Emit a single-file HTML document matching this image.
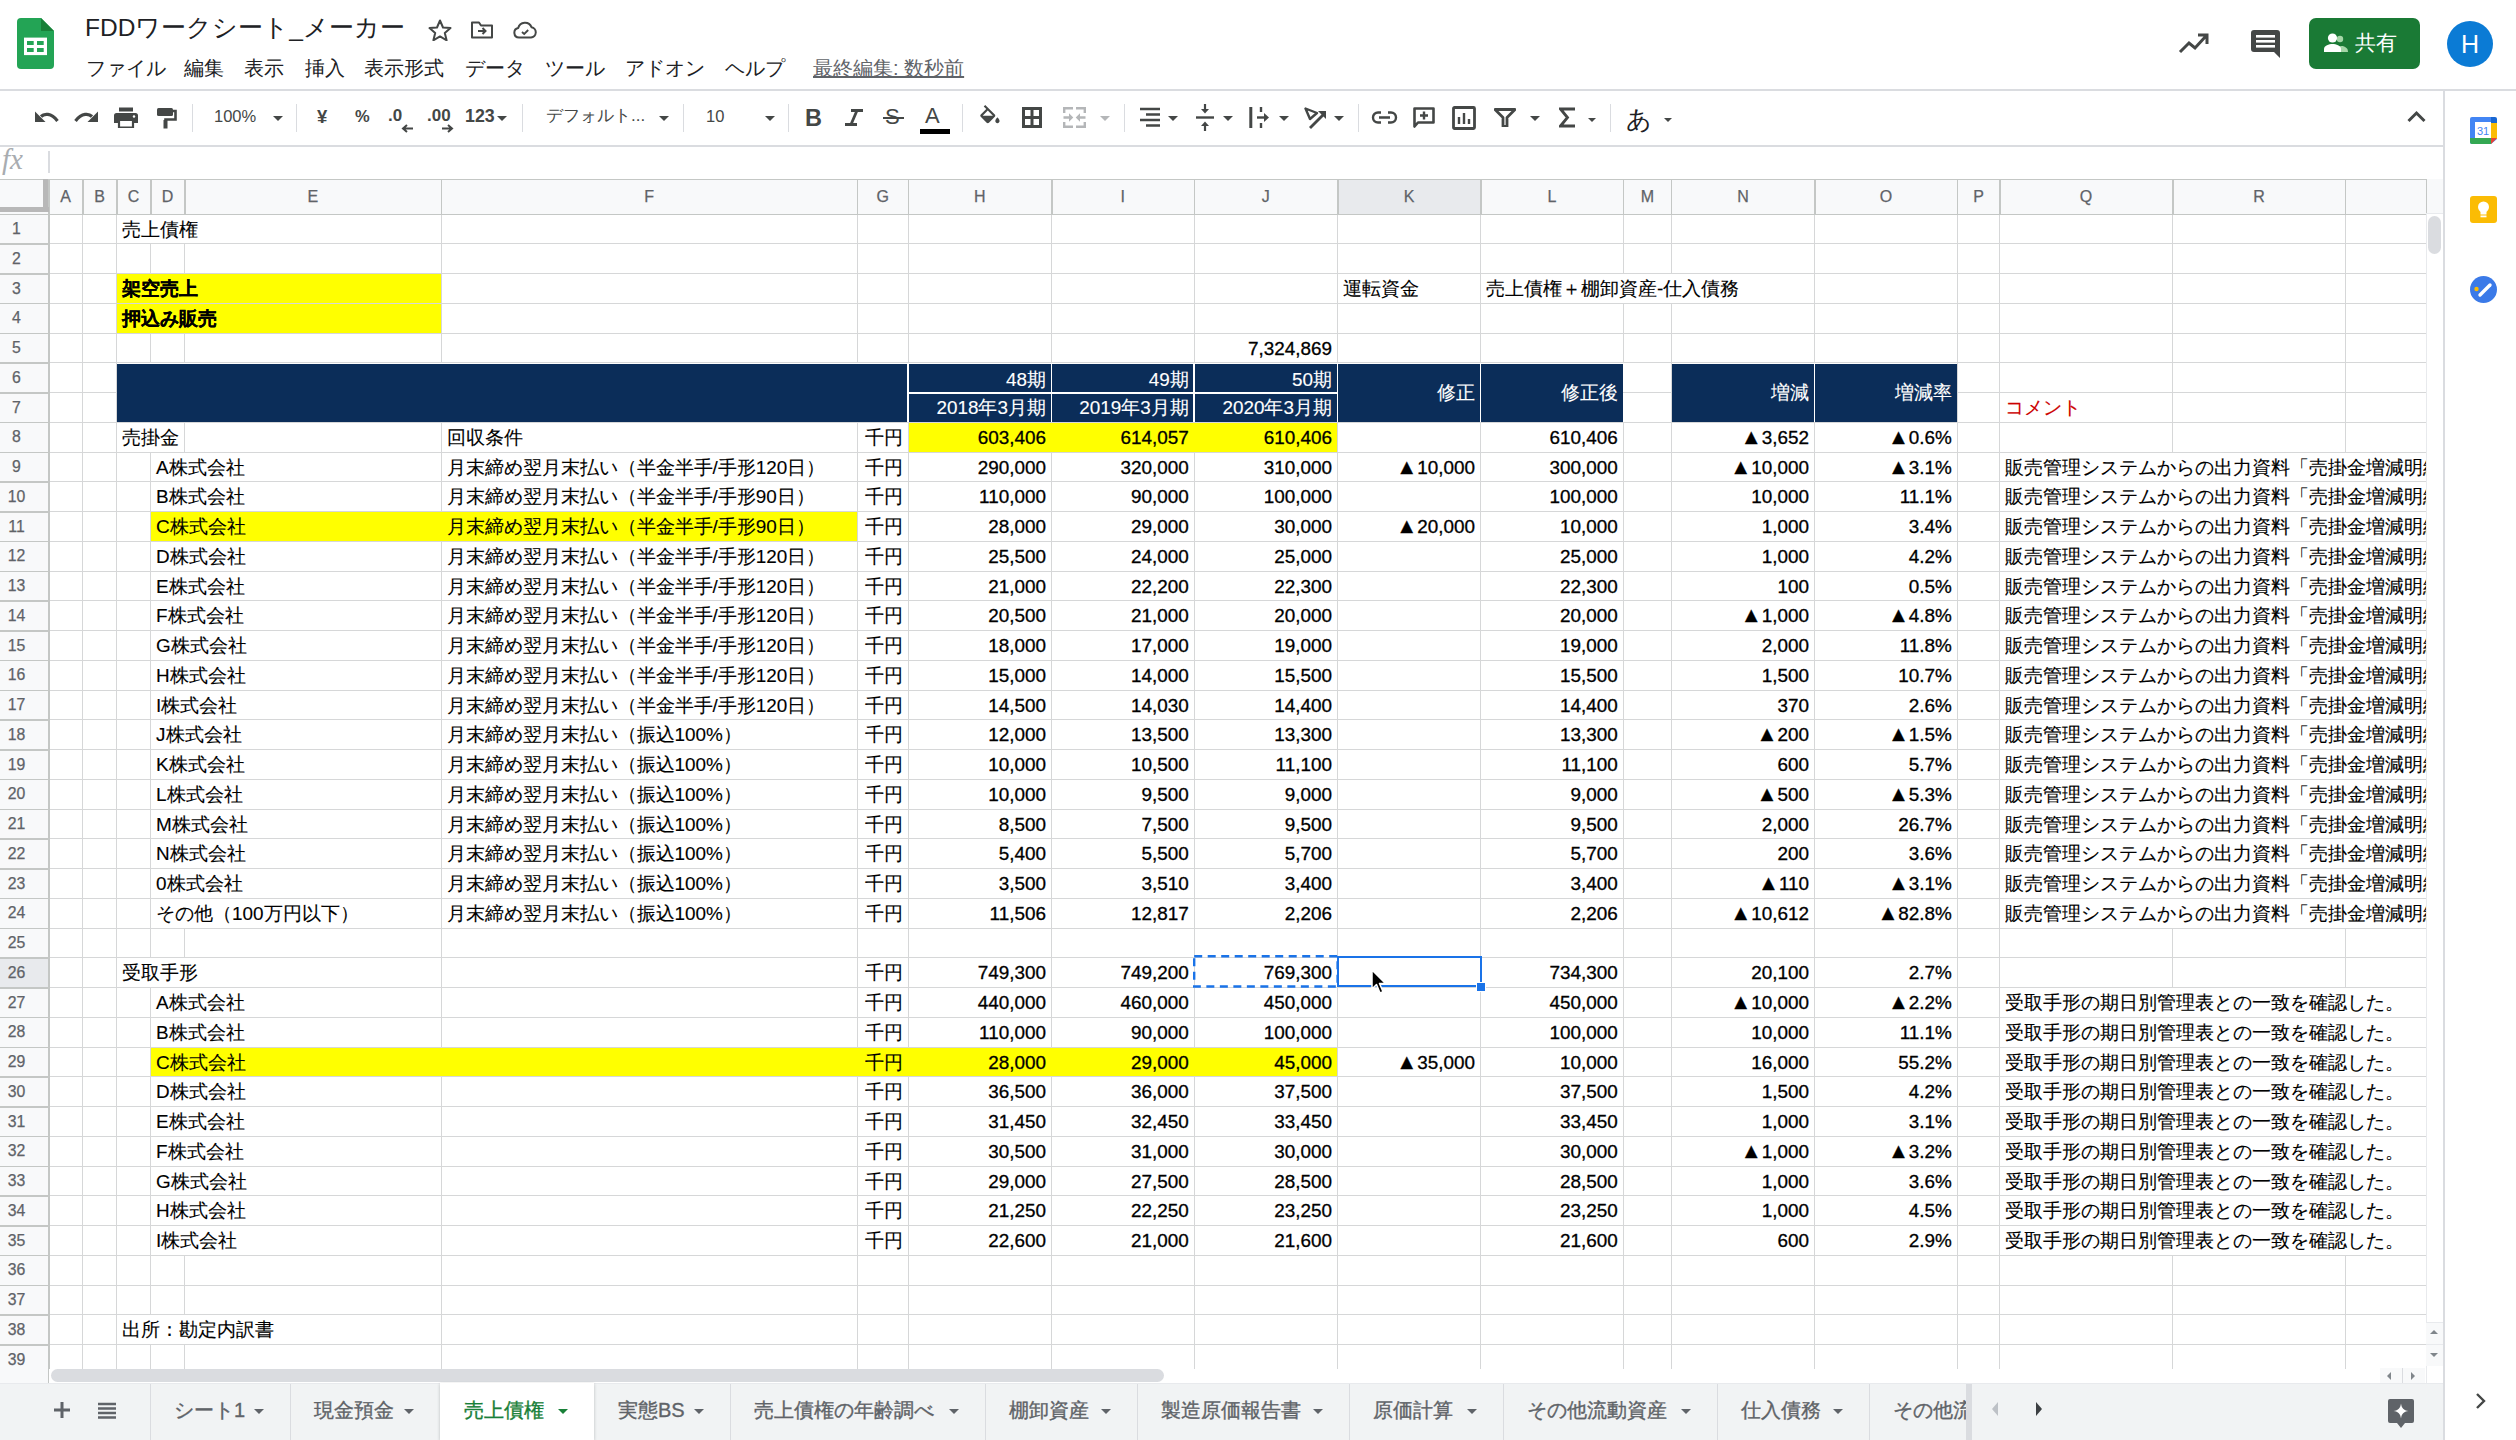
<!DOCTYPE html><html lang="ja"><head><meta charset="utf-8"><title>FDD</title><style>
*{margin:0;padding:0;box-sizing:border-box}
html,body{width:2516px;height:1440px;overflow:hidden;background:#fff;font-family:"Liberation Sans",sans-serif;color:#000}
.a{position:absolute}
.ic{position:absolute;fill:#444746}
.mn{position:absolute;top:54px;font-size:20px;color:#202124;white-space:nowrap;line-height:28px}
.tb{position:absolute;color:#444746;white-space:nowrap}
.sep{position:absolute;top:104px;width:1px;height:28px;background:#dadce0}
.arr{position:absolute;width:0;height:0;border-left:5.5px solid transparent;border-right:5.5px solid transparent;border-top:5.5px solid #444746}
.ch{position:absolute;top:179px;height:35px;line-height:35px;text-align:center;font-size:16px;color:#5f6368;-webkit-text-stroke:0.25px currentColor}
.rh{position:absolute;left:0;width:33px;text-align:center;font-size:15.8px;color:#5f6368;line-height:29.75px;height:29.75px;-webkit-text-stroke:0.25px currentColor}
.c{position:absolute;font-size:18.9px;line-height:29.75px;height:29.75px;white-space:nowrap;overflow:visible;-webkit-text-stroke:0.12px currentColor}
.n{-webkit-text-stroke:0.3px currentColor}
.r{text-align:right}
.w{color:#fff}
.tab{position:absolute;top:1384px;height:56px;line-height:52px;font-size:20px;color:#5f6368;white-space:nowrap;-webkit-text-stroke:0.35px currentColor}
</style></head><body><svg class="a" style="left:17px;top:18px" width="37" height="51" viewBox="0 0 37 51"><path d="M4 0H24L37 13V47A4 4 0 0 1 33 51H4A4 4 0 0 1 0 47V4A4 4 0 0 1 4 0Z" fill="#23a455"/><path d="M24 0L37 13H24Z" fill="#188038"/><rect x="7" y="19.6" width="23" height="17.5" fill="#fff"/><rect x="10" y="23" width="6.7" height="4" fill="#23a455"/><rect x="20" y="23" width="6.7" height="4" fill="#23a455"/><rect x="10" y="30" width="6.7" height="4" fill="#23a455"/><rect x="20" y="30" width="6.7" height="4" fill="#23a455"/></svg><div class="a" style="left:85px;top:12px;font-size:24.5px;line-height:32px;color:#202124;white-space:nowrap">FDDワークシート_メーカー</div><svg class="a" style="left:428px;top:19px" width="24" height="22" viewBox="0 0 24 22"><path d="M12 1.5l3 7 7.5.6-5.7 4.9 1.8 7.3L12 17.4 5.4 21.3l1.8-7.3L1.5 9.1 9 8.5z" fill="none" stroke="#444746" stroke-width="2" stroke-linejoin="round"/></svg><svg class="a" style="left:471px;top:21px" width="22" height="18" viewBox="0 0 22 18"><path d="M1 3V16.5H21V4.5H10L8 1.5H1Z" fill="none" stroke="#444746" stroke-width="2" stroke-linejoin="round"/><path d="M7 10H14M11.5 7L14.5 10L11.5 13" fill="none" stroke="#444746" stroke-width="2"/></svg><svg class="a" style="left:513px;top:21px" width="24" height="18" viewBox="0 0 24 18"><path d="M6 16.5A4.8 4.8 0 0 1 5.2 7 7 7 0 0 1 18.5 6.2 5.2 5.2 0 0 1 18 16.5Z" fill="none" stroke="#444746" stroke-width="2" stroke-linejoin="round"/><path d="M9 11l2.2 2 4-4" fill="none" stroke="#444746" stroke-width="1.8"/></svg><div class="mn" style="left:86px">ファイル</div><div class="mn" style="left:184px">編集</div><div class="mn" style="left:244px">表示</div><div class="mn" style="left:305px">挿入</div><div class="mn" style="left:364px">表示形式</div><div class="mn" style="left:465px">データ</div><div class="mn" style="left:545px">ツール</div><div class="mn" style="left:625px">アドオン</div><div class="mn" style="left:725px">ヘルプ</div><div class="mn" style="left:813px;color:#5f6368;text-decoration:underline">最終編集: 数秒前</div><svg class="a" style="left:2178px;top:32px" width="32" height="22" viewBox="0 0 32 22"><path d="M2 20L11 11L17 16L28 4M20 3H29V12" fill="none" stroke="#444746" stroke-width="3"/></svg><svg class="a" style="left:2251px;top:29px" width="30" height="30" viewBox="0 0 30 30"><path d="M3 1H26A3 3 0 0 1 29 4V29L23 23H3A3 3 0 0 1 0 20V4A3 3 0 0 1 3 1Z" fill="#444746"/><rect x="5" y="6" width="19" height="2.6" fill="#fff"/><rect x="5" y="11" width="19" height="2.6" fill="#fff"/><rect x="5" y="16" width="19" height="2.6" fill="#fff"/></svg><div class="a" style="left:2309px;top:18px;width:111px;height:51px;border-radius:7px;background:#1a7a35"></div><svg class="a" style="left:2324px;top:33px" width="26" height="20" viewBox="0 0 26 20"><circle cx="16" cy="6" r="3.2" fill="#a5d6a7"/><path d="M13 19V15.5C14 13 18 12.5 20 13.5S24 15 24 19Z" fill="#a5d6a7"/><circle cx="8.5" cy="5" r="4.6" fill="#fff"/><path d="M0 19V16C0 12.5 5 11 8.5 11S17 12.5 17 16V19Z" fill="#fff"/></svg><div class="a" style="left:2355px;top:29px;font-size:21px;line-height:28px;color:#fff;white-space:nowrap">共有</div><div class="a" style="left:2447px;top:21px;width:46px;height:46px;border-radius:50%;background:#0b7bd5;color:#fff;font-size:25px;line-height:46px;text-align:center">H</div><div class="a" style="left:0;top:89px;width:2516px;height:1.5px;background:#dadce0"></div><svg class="a" style="left:34px;top:110px" width="25" height="15" viewBox="0 0 25 15"><path d="M7 6.5C10 3.5 17 2.5 23.5 11" fill="none" stroke="#444746" stroke-width="3.2"/><path d="M1 1.5V12H11.5Z" fill="#444746"/></svg><svg class="a" style="left:74px;top:110px" width="25" height="15" viewBox="0 0 25 15"><path d="M18 6.5C15 3.5 8 2.5 1.5 11" fill="none" stroke="#444746" stroke-width="3.2"/><path d="M24 1.5V12H13.5Z" fill="#444746"/></svg><svg class="a" style="left:114px;top:107px" width="24" height="21" viewBox="0 0 24 21"><rect x="5" y="0.5" width="14" height="4" fill="#444746"/><path d="M2.5 6H21.5A2.5 2.5 0 0 1 24 8.5V16H19.5V12H4.5V16H0V8.5A2.5 2.5 0 0 1 2.5 6Z" fill="#444746"/><path d="M5 13H19V20.5H5Z" fill="none" stroke="#444746" stroke-width="2.2"/><circle cx="20" cy="9.5" r="1.2" fill="#fff"/></svg><svg class="a" style="left:156px;top:107px" width="21" height="22" viewBox="0 0 21 22"><rect x="1" y="1" width="16" height="8" rx="1.5" fill="#444746"/><path d="M17 4H19.5V12.5H9.5V21" fill="none" stroke="#444746" stroke-width="2.6"/><rect x="7.5" y="13" width="4" height="8.5" fill="#444746"/></svg><div class="sep" style="left:192px"></div><div class="sep" style="left:296px"></div><div class="sep" style="left:522px"></div><div class="sep" style="left:683px"></div><div class="sep" style="left:788px"></div><div class="sep" style="left:962px"></div><div class="sep" style="left:1124px"></div><div class="sep" style="left:1358px"></div><div class="sep" style="left:1610px"></div><div class="tb" style="left:214px;top:104px;font-size:16.5px;line-height:24px">100%</div><div class="arr" style="left:273px;top:116px;border-left-width:5.5px;border-right-width:5.5px;border-top:5.5px solid #444746"></div><div class="tb" style="left:317px;top:103px;font-size:18.5px;line-height:28px;font-weight:bold">¥</div><div class="tb" style="left:355px;top:104px;font-size:16.5px;line-height:24px;font-weight:bold">%</div><div class="tb" style="left:388px;top:104px;font-size:17px;line-height:24px;font-weight:bold">.0</div><svg class="a" style="left:401px;top:124px" width="12" height="9" viewBox="0 0 12 9"><path d="M12 4.5H3M6 1L2 4.5L6 8" fill="none" stroke="#444746" stroke-width="2"/></svg><div class="tb" style="left:427px;top:104px;font-size:17px;line-height:24px;font-weight:bold">.00</div><svg class="a" style="left:442px;top:124px" width="12" height="9" viewBox="0 0 12 9"><path d="M0 4.5H9M6 1L10 4.5L6 8" fill="none" stroke="#444746" stroke-width="2"/></svg><div class="tb" style="left:465px;top:104px;font-size:17.8px;line-height:24px;font-weight:bold">123</div><div class="arr" style="left:497px;top:116px;border-left-width:5.5px;border-right-width:5.5px;border-top:5.5px solid #444746"></div><div class="tb" style="left:546px;top:103px;font-size:17px;line-height:26px">デフォルト...</div><div class="arr" style="left:659px;top:116px;border-left-width:5.5px;border-right-width:5.5px;border-top:5.5px solid #444746"></div><div class="tb" style="left:706px;top:104px;font-size:16.5px;line-height:24px">10</div><div class="arr" style="left:765px;top:116px;border-left-width:5.5px;border-right-width:5.5px;border-top:5.5px solid #444746"></div><div class="tb" style="left:805px;top:101px;font-size:23.5px;line-height:34px;font-weight:bold;color:#444746">B</div><svg class="a" style="left:844px;top:109px" width="20" height="17" viewBox="0 0 20 17"><path d="M7 1.5H19M1 15.5H13M13 1.5L7 15.5" fill="none" stroke="#444746" stroke-width="2.8"/></svg><div class="tb" style="left:885px;top:101px;font-size:22px;line-height:32px">S</div><div class="a" style="left:883px;top:116.5px;width:21px;height:2.6px;background:#444746"></div><div class="tb" style="left:925px;top:100px;font-size:22px;line-height:32px">A</div><div class="a" style="left:920px;top:129px;width:30px;height:5px;background:#000"></div><svg class="a" style="left:977px;top:105px" width="25" height="21" viewBox="0 0 23.2 19.6"><g transform="scale(1.0)"><path d="M16.56 8.94L7.62 0 6.21 1.41l2.38 2.38-5.15 5.15c-.59.59-.59 1.54 0 2.12l5.5 5.5c.29.29.68.44 1.060.44s.77-.15 1.06-.44l5.5-5.5c.59-.58.59-1.53 0-2.12zM5.21 10L10 5.21 14.79 10H5.21zM19 11.5s-2 2.17-2 3.5c0 1.1.9 2 2 2s2-.9 2-2c0-1.33-2-3.5-2-3.5z" fill="#444746"/></g></svg><svg class="a" style="left:1022px;top:107px" width="20" height="21" viewBox="0 0 20 21"><path d="M1.5 1.5H18.5V19.5H1.5ZM10 1.5V19.5M1.5 10.5H18.5" fill="none" stroke="#444746" stroke-width="3"/></svg><svg class="a" style="left:1063px;top:107px" width="23" height="21" viewBox="0 0 23 21"><path d="M1.2 6V1.2H10M13 1.2H21.8V6M1.2 15V19.8H10M13 19.8H21.8V15" fill="none" stroke="#b4b6b8" stroke-width="2.4"/><path d="M0.5 10.5H7M22.5 10.5H16" stroke="#b4b6b8" stroke-width="2.4"/><path d="M6 6.3L10.3 10.5L6 14.7ZM17 6.3L12.7 10.5L17 14.7Z" fill="#b4b6b8"/></svg><div class="arr" style="left:1100px;top:116px;border-left-width:5.5px;border-right-width:5.5px;border-top:5.5px solid #b4b6b8"></div><svg class="a" style="left:1140px;top:107px" width="21" height="21" viewBox="0 0 21 21"><path d="M0 2H20M6 7.5H20M0 13H20M6 18.5H20" fill="none" stroke="#444746" stroke-width="2.4"/></svg><div class="arr" style="left:1168px;top:116px;border-left-width:5.5px;border-right-width:5.5px;border-top:5.5px solid #444746"></div><svg class="a" style="left:1196px;top:104px" width="18" height="27" viewBox="0 0 18 27"><path d="M0 13.5H18" stroke="#444746" stroke-width="2.4"/><path d="M9 0V6" stroke="#444746" stroke-width="2.2"/><path d="M5 5H13L9 9.5Z" fill="#444746"/><path d="M9 27V21" stroke="#444746" stroke-width="2.2"/><path d="M5 22H13L9 17.5Z" fill="#444746"/></svg><div class="arr" style="left:1223px;top:116px;border-left-width:5.5px;border-right-width:5.5px;border-top:5.5px solid #444746"></div><svg class="a" style="left:1249px;top:107px" width="21" height="21" viewBox="0 0 21 21"><path d="M1.8 0V21" stroke="#444746" stroke-width="3"/><path d="M12 0V5M12 16V21" stroke="#444746" stroke-width="2.4"/><path d="M8 10.5H16" stroke="#444746" stroke-width="2.4"/><path d="M15 6L20 10.5L15 15Z" fill="#444746"/></svg><div class="arr" style="left:1279px;top:116px;border-left-width:5.5px;border-right-width:5.5px;border-top:5.5px solid #444746"></div><svg class="a" style="left:1304px;top:107px" width="23" height="22" viewBox="0 0 23 22"><path d="M1.5 1.5L13 6L6 12Z" fill="none" stroke="#444746" stroke-width="2.4" stroke-linejoin="round"/><path d="M6 21L20 7" stroke="#444746" stroke-width="2.8"/><path d="M14 4H22V12Z" fill="#444746"/></svg><div class="arr" style="left:1334px;top:116px;border-left-width:5.5px;border-right-width:5.5px;border-top:5.5px solid #444746"></div><svg class="a" style="left:1371px;top:110px" width="27" height="15" viewBox="0 0 27 15"><path d="M10 2.5H7A5 5 0 0 0 7 12.5H10M17 2.5H20A5 5 0 0 1 20 12.5H17M8 7.5H19" fill="none" stroke="#444746" stroke-width="2.4"/></svg><svg class="a" style="left:1413px;top:107px" width="22" height="21" viewBox="0 0 22 21"><path d="M1.5 1.5H20.5V15.5H5L1.5 19.5Z" fill="none" stroke="#444746" stroke-width="2.6" stroke-linejoin="round"/><path d="M11 4.5V12.5M7 8.5H15" stroke="#444746" stroke-width="2.4"/></svg><svg class="a" style="left:1452px;top:106px" width="24" height="24" viewBox="0 0 24 24"><rect x="1.5" y="1.5" width="21" height="21" fill="none" stroke="#444746" stroke-width="2.8" rx="1"/><path d="M7 11V18M12 7V18M17 13V18" stroke="#444746" stroke-width="2.4"/></svg><svg class="a" style="left:1494px;top:108px" width="22" height="19" viewBox="0 0 22 19"><path d="M1 1.5H21L13 9.5V18.5H9V9.5Z" fill="none" stroke="#444746" stroke-width="2.8" stroke-linejoin="round"/></svg><div class="arr" style="left:1530px;top:116px;border-left-width:5.5px;border-right-width:5.5px;border-top:5.5px solid #444746"></div><svg class="a" style="left:1559px;top:107px" width="17" height="21" viewBox="0 0 17 21"><path d="M16 2H1.5L8.5 10.5L1.5 19H16" fill="none" stroke="#444746" stroke-width="2.8"/></svg><div class="arr" style="left:1588px;top:118px;border-left-width:4.0px;border-right-width:4.0px;border-top:4.0px solid #444746"></div><div class="tb" style="left:1626px;top:102px;font-size:25px;line-height:34px;color:#202124">あ</div><div class="arr" style="left:1664px;top:118px;border-left-width:4.0px;border-right-width:4.0px;border-top:4.0px solid #444746"></div><svg class="a" style="left:2407px;top:110px" width="19" height="13" viewBox="0 0 19 13"><path d="M1.5 11L9.5 3L17.5 11" fill="none" stroke="#444746" stroke-width="3"/></svg><div class="a" style="left:0;top:145px;width:2443px;height:1.5px;background:#dadce0"></div><div class="a" style="left:2443px;top:90px;width:1.5px;height:1350px;background:#dadce0"></div><div class="a" style="left:2px;top:139px;font-size:29px;line-height:40px;font-family:'Liberation Serif',serif;font-style:italic;color:#a8acb0">fx</div><div class="a" style="left:48px;top:151px;width:1.5px;height:22px;background:#dadce0"></div><svg class="a" style="left:2470px;top:117px" width="27" height="27" viewBox="0 0 27 27"><path d="M2 0H21L27 6V22L21 27H2A2 2 0 0 1 0 25V2A2 2 0 0 1 2 0Z" fill="#4285f4"/><path d="M21 0H25A2 2 0 0 1 27 2V6H21Z" fill="#1967d2"/><rect x="21" y="6" width="6" height="16" fill="#fbbc04"/><path d="M0 21H21V27H2A2 2 0 0 1 0 25Z" fill="#34a853"/><path d="M21 21H27L21 27Z" fill="#ea4335"/><rect x="5" y="5" width="16" height="16" fill="#fff"/><text x="13" y="18" font-size="11" text-anchor="middle" fill="#4285f4" font-family="Liberation Sans">31</text></svg><svg class="a" style="left:2470px;top:196px" width="27" height="27" viewBox="0 0 27 27"><rect width="27" height="27" rx="3" fill="#fbbc04"/><circle cx="13.5" cy="11" r="5.5" fill="#fff"/><rect x="10.5" y="15" width="6" height="3.5" fill="#fff"/><rect x="10.5" y="19.5" width="6" height="1.8" fill="#fff"/></svg><svg class="a" style="left:2470px;top:276px" width="27" height="27" viewBox="0 0 27 27"><circle cx="13.5" cy="13.5" r="13.5" fill="#3b7ae8"/><path d="M10 19L20 9" stroke="#fff" stroke-width="3.4" stroke-linecap="round"/><circle cx="6.5" cy="13" r="2.2" fill="#fbbc04"/></svg><div class="a" style="left:0px;top:179px;width:2426px;height:35px;background:#f8f9fa"></div><div class="a" style="left:1337.5px;top:179px;width:143px;height:35px;background:#e8eaed"></div><div class="a" style="left:0px;top:214px;width:48.7px;height:1169px;background:#f8f9fa"></div><div class="a" style="left:0px;top:957.75px;width:48.7px;height:29.75px;background:#e8eaed"></div><div class="a" style="left:116.5px;top:273.8px;width:324.5px;height:58.8px;background:#ffff00"></div><div class="a" style="left:116.5px;top:363.75px;width:1506.8px;height:58.1px;background:#0b2d59"></div><div class="a" style="left:1671.4px;top:363.75px;width:286px;height:58.1px;background:#0b2d59"></div><div class="a" style="left:908.2px;top:422.55px;width:429.3px;height:29.05px;background:#ffff00"></div><div class="a" style="left:150.6px;top:511.8px;width:706.8px;height:29.05px;background:#ffff00"></div><div class="a" style="left:150.6px;top:1047.3px;width:1186.9px;height:29.05px;background:#ffff00"></div><div class="a" style="left:82px;top:214px;width:1px;height:29.75px;background:#d6d7d8"></div><div class="a" style="left:82px;top:243.75px;width:1px;height:29.75px;background:#d6d7d8"></div><div class="a" style="left:82px;top:273.5px;width:1px;height:29.75px;background:#d6d7d8"></div><div class="a" style="left:82px;top:303.25px;width:1px;height:29.75px;background:#d6d7d8"></div><div class="a" style="left:82px;top:333px;width:1px;height:29.75px;background:#d6d7d8"></div><div class="a" style="left:82px;top:362.75px;width:1px;height:29.75px;background:#d6d7d8"></div><div class="a" style="left:82px;top:392.5px;width:1px;height:29.75px;background:#d6d7d8"></div><div class="a" style="left:82px;top:422.25px;width:1px;height:29.75px;background:#d6d7d8"></div><div class="a" style="left:82px;top:452px;width:1px;height:29.75px;background:#d6d7d8"></div><div class="a" style="left:82px;top:481.75px;width:1px;height:29.75px;background:#d6d7d8"></div><div class="a" style="left:82px;top:511.5px;width:1px;height:29.75px;background:#d6d7d8"></div><div class="a" style="left:82px;top:541.25px;width:1px;height:29.75px;background:#d6d7d8"></div><div class="a" style="left:82px;top:571px;width:1px;height:29.75px;background:#d6d7d8"></div><div class="a" style="left:82px;top:600.75px;width:1px;height:29.75px;background:#d6d7d8"></div><div class="a" style="left:82px;top:630.5px;width:1px;height:29.75px;background:#d6d7d8"></div><div class="a" style="left:82px;top:660.25px;width:1px;height:29.75px;background:#d6d7d8"></div><div class="a" style="left:82px;top:690px;width:1px;height:29.75px;background:#d6d7d8"></div><div class="a" style="left:82px;top:719.75px;width:1px;height:29.75px;background:#d6d7d8"></div><div class="a" style="left:82px;top:749.5px;width:1px;height:29.75px;background:#d6d7d8"></div><div class="a" style="left:82px;top:779.25px;width:1px;height:29.75px;background:#d6d7d8"></div><div class="a" style="left:82px;top:809px;width:1px;height:29.75px;background:#d6d7d8"></div><div class="a" style="left:82px;top:838.75px;width:1px;height:29.75px;background:#d6d7d8"></div><div class="a" style="left:82px;top:868.5px;width:1px;height:29.75px;background:#d6d7d8"></div><div class="a" style="left:82px;top:898.25px;width:1px;height:29.75px;background:#d6d7d8"></div><div class="a" style="left:82px;top:928px;width:1px;height:29.75px;background:#d6d7d8"></div><div class="a" style="left:82px;top:957.75px;width:1px;height:29.75px;background:#d6d7d8"></div><div class="a" style="left:82px;top:987.5px;width:1px;height:29.75px;background:#d6d7d8"></div><div class="a" style="left:82px;top:1017.25px;width:1px;height:29.75px;background:#d6d7d8"></div><div class="a" style="left:82px;top:1047px;width:1px;height:29.75px;background:#d6d7d8"></div><div class="a" style="left:82px;top:1076.75px;width:1px;height:29.75px;background:#d6d7d8"></div><div class="a" style="left:82px;top:1106.5px;width:1px;height:29.75px;background:#d6d7d8"></div><div class="a" style="left:82px;top:1136.25px;width:1px;height:29.75px;background:#d6d7d8"></div><div class="a" style="left:82px;top:1166px;width:1px;height:29.75px;background:#d6d7d8"></div><div class="a" style="left:82px;top:1195.75px;width:1px;height:29.75px;background:#d6d7d8"></div><div class="a" style="left:82px;top:1225.5px;width:1px;height:29.75px;background:#d6d7d8"></div><div class="a" style="left:82px;top:1255.25px;width:1px;height:29.75px;background:#d6d7d8"></div><div class="a" style="left:82px;top:1285px;width:1px;height:29.75px;background:#d6d7d8"></div><div class="a" style="left:82px;top:1314.75px;width:1px;height:29.75px;background:#d6d7d8"></div><div class="a" style="left:82px;top:1344.5px;width:1px;height:24.5px;background:#d6d7d8"></div><div class="a" style="left:116px;top:214px;width:1px;height:29.75px;background:#d6d7d8"></div><div class="a" style="left:116px;top:243.75px;width:1px;height:29.75px;background:#d6d7d8"></div><div class="a" style="left:116px;top:273.5px;width:1px;height:29.75px;background:#d6d7d8"></div><div class="a" style="left:116px;top:303.25px;width:1px;height:29.75px;background:#d6d7d8"></div><div class="a" style="left:116px;top:333px;width:1px;height:29.75px;background:#d6d7d8"></div><div class="a" style="left:116px;top:362.75px;width:1px;height:29.75px;background:#d6d7d8"></div><div class="a" style="left:116px;top:392.5px;width:1px;height:29.75px;background:#d6d7d8"></div><div class="a" style="left:116px;top:422.25px;width:1px;height:29.75px;background:#d6d7d8"></div><div class="a" style="left:116px;top:452px;width:1px;height:29.75px;background:#d6d7d8"></div><div class="a" style="left:116px;top:481.75px;width:1px;height:29.75px;background:#d6d7d8"></div><div class="a" style="left:116px;top:511.5px;width:1px;height:29.75px;background:#d6d7d8"></div><div class="a" style="left:116px;top:541.25px;width:1px;height:29.75px;background:#d6d7d8"></div><div class="a" style="left:116px;top:571px;width:1px;height:29.75px;background:#d6d7d8"></div><div class="a" style="left:116px;top:600.75px;width:1px;height:29.75px;background:#d6d7d8"></div><div class="a" style="left:116px;top:630.5px;width:1px;height:29.75px;background:#d6d7d8"></div><div class="a" style="left:116px;top:660.25px;width:1px;height:29.75px;background:#d6d7d8"></div><div class="a" style="left:116px;top:690px;width:1px;height:29.75px;background:#d6d7d8"></div><div class="a" style="left:116px;top:719.75px;width:1px;height:29.75px;background:#d6d7d8"></div><div class="a" style="left:116px;top:749.5px;width:1px;height:29.75px;background:#d6d7d8"></div><div class="a" style="left:116px;top:779.25px;width:1px;height:29.75px;background:#d6d7d8"></div><div class="a" style="left:116px;top:809px;width:1px;height:29.75px;background:#d6d7d8"></div><div class="a" style="left:116px;top:838.75px;width:1px;height:29.75px;background:#d6d7d8"></div><div class="a" style="left:116px;top:868.5px;width:1px;height:29.75px;background:#d6d7d8"></div><div class="a" style="left:116px;top:898.25px;width:1px;height:29.75px;background:#d6d7d8"></div><div class="a" style="left:116px;top:928px;width:1px;height:29.75px;background:#d6d7d8"></div><div class="a" style="left:116px;top:957.75px;width:1px;height:29.75px;background:#d6d7d8"></div><div class="a" style="left:116px;top:987.5px;width:1px;height:29.75px;background:#d6d7d8"></div><div class="a" style="left:116px;top:1017.25px;width:1px;height:29.75px;background:#d6d7d8"></div><div class="a" style="left:116px;top:1047px;width:1px;height:29.75px;background:#d6d7d8"></div><div class="a" style="left:116px;top:1076.75px;width:1px;height:29.75px;background:#d6d7d8"></div><div class="a" style="left:116px;top:1106.5px;width:1px;height:29.75px;background:#d6d7d8"></div><div class="a" style="left:116px;top:1136.25px;width:1px;height:29.75px;background:#d6d7d8"></div><div class="a" style="left:116px;top:1166px;width:1px;height:29.75px;background:#d6d7d8"></div><div class="a" style="left:116px;top:1195.75px;width:1px;height:29.75px;background:#d6d7d8"></div><div class="a" style="left:116px;top:1225.5px;width:1px;height:29.75px;background:#d6d7d8"></div><div class="a" style="left:116px;top:1255.25px;width:1px;height:29.75px;background:#d6d7d8"></div><div class="a" style="left:116px;top:1285px;width:1px;height:29.75px;background:#d6d7d8"></div><div class="a" style="left:116px;top:1314.75px;width:1px;height:29.75px;background:#d6d7d8"></div><div class="a" style="left:116px;top:1344.5px;width:1px;height:24.5px;background:#d6d7d8"></div><div class="a" style="left:150.1px;top:243.75px;width:1px;height:29.75px;background:#d6d7d8"></div><div class="a" style="left:150.1px;top:333px;width:1px;height:29.75px;background:#d6d7d8"></div><div class="a" style="left:150.1px;top:452px;width:1px;height:29.75px;background:#d6d7d8"></div><div class="a" style="left:150.1px;top:481.75px;width:1px;height:29.75px;background:#d6d7d8"></div><div class="a" style="left:150.1px;top:511.5px;width:1px;height:29.75px;background:#d6d7d8"></div><div class="a" style="left:150.1px;top:541.25px;width:1px;height:29.75px;background:#d6d7d8"></div><div class="a" style="left:150.1px;top:571px;width:1px;height:29.75px;background:#d6d7d8"></div><div class="a" style="left:150.1px;top:600.75px;width:1px;height:29.75px;background:#d6d7d8"></div><div class="a" style="left:150.1px;top:630.5px;width:1px;height:29.75px;background:#d6d7d8"></div><div class="a" style="left:150.1px;top:660.25px;width:1px;height:29.75px;background:#d6d7d8"></div><div class="a" style="left:150.1px;top:690px;width:1px;height:29.75px;background:#d6d7d8"></div><div class="a" style="left:150.1px;top:719.75px;width:1px;height:29.75px;background:#d6d7d8"></div><div class="a" style="left:150.1px;top:749.5px;width:1px;height:29.75px;background:#d6d7d8"></div><div class="a" style="left:150.1px;top:779.25px;width:1px;height:29.75px;background:#d6d7d8"></div><div class="a" style="left:150.1px;top:809px;width:1px;height:29.75px;background:#d6d7d8"></div><div class="a" style="left:150.1px;top:838.75px;width:1px;height:29.75px;background:#d6d7d8"></div><div class="a" style="left:150.1px;top:868.5px;width:1px;height:29.75px;background:#d6d7d8"></div><div class="a" style="left:150.1px;top:898.25px;width:1px;height:29.75px;background:#d6d7d8"></div><div class="a" style="left:150.1px;top:928px;width:1px;height:29.75px;background:#d6d7d8"></div><div class="a" style="left:150.1px;top:987.5px;width:1px;height:29.75px;background:#d6d7d8"></div><div class="a" style="left:150.1px;top:1017.25px;width:1px;height:29.75px;background:#d6d7d8"></div><div class="a" style="left:150.1px;top:1047px;width:1px;height:29.75px;background:#d6d7d8"></div><div class="a" style="left:150.1px;top:1076.75px;width:1px;height:29.75px;background:#d6d7d8"></div><div class="a" style="left:150.1px;top:1106.5px;width:1px;height:29.75px;background:#d6d7d8"></div><div class="a" style="left:150.1px;top:1136.25px;width:1px;height:29.75px;background:#d6d7d8"></div><div class="a" style="left:150.1px;top:1166px;width:1px;height:29.75px;background:#d6d7d8"></div><div class="a" style="left:150.1px;top:1195.75px;width:1px;height:29.75px;background:#d6d7d8"></div><div class="a" style="left:150.1px;top:1225.5px;width:1px;height:29.75px;background:#d6d7d8"></div><div class="a" style="left:150.1px;top:1255.25px;width:1px;height:29.75px;background:#d6d7d8"></div><div class="a" style="left:150.1px;top:1285px;width:1px;height:29.75px;background:#d6d7d8"></div><div class="a" style="left:150.1px;top:1344.5px;width:1px;height:24.5px;background:#d6d7d8"></div><div class="a" style="left:184.2px;top:243.75px;width:1px;height:29.75px;background:#d6d7d8"></div><div class="a" style="left:184.2px;top:333px;width:1px;height:29.75px;background:#d6d7d8"></div><div class="a" style="left:184.2px;top:422.25px;width:1px;height:29.75px;background:#d6d7d8"></div><div class="a" style="left:184.2px;top:928px;width:1px;height:29.75px;background:#d6d7d8"></div><div class="a" style="left:184.2px;top:1255.25px;width:1px;height:29.75px;background:#d6d7d8"></div><div class="a" style="left:184.2px;top:1285px;width:1px;height:29.75px;background:#d6d7d8"></div><div class="a" style="left:184.2px;top:1344.5px;width:1px;height:24.5px;background:#d6d7d8"></div><div class="a" style="left:440.5px;top:214px;width:1px;height:29.75px;background:#d6d7d8"></div><div class="a" style="left:440.5px;top:243.75px;width:1px;height:29.75px;background:#d6d7d8"></div><div class="a" style="left:440.5px;top:273.5px;width:1px;height:29.75px;background:#d6d7d8"></div><div class="a" style="left:440.5px;top:303.25px;width:1px;height:29.75px;background:#d6d7d8"></div><div class="a" style="left:440.5px;top:333px;width:1px;height:29.75px;background:#d6d7d8"></div><div class="a" style="left:440.5px;top:422.25px;width:1px;height:29.75px;background:#d6d7d8"></div><div class="a" style="left:440.5px;top:452px;width:1px;height:29.75px;background:#d6d7d8"></div><div class="a" style="left:440.5px;top:481.75px;width:1px;height:29.75px;background:#d6d7d8"></div><div class="a" style="left:440.5px;top:541.25px;width:1px;height:29.75px;background:#d6d7d8"></div><div class="a" style="left:440.5px;top:571px;width:1px;height:29.75px;background:#d6d7d8"></div><div class="a" style="left:440.5px;top:600.75px;width:1px;height:29.75px;background:#d6d7d8"></div><div class="a" style="left:440.5px;top:630.5px;width:1px;height:29.75px;background:#d6d7d8"></div><div class="a" style="left:440.5px;top:660.25px;width:1px;height:29.75px;background:#d6d7d8"></div><div class="a" style="left:440.5px;top:690px;width:1px;height:29.75px;background:#d6d7d8"></div><div class="a" style="left:440.5px;top:719.75px;width:1px;height:29.75px;background:#d6d7d8"></div><div class="a" style="left:440.5px;top:749.5px;width:1px;height:29.75px;background:#d6d7d8"></div><div class="a" style="left:440.5px;top:779.25px;width:1px;height:29.75px;background:#d6d7d8"></div><div class="a" style="left:440.5px;top:809px;width:1px;height:29.75px;background:#d6d7d8"></div><div class="a" style="left:440.5px;top:838.75px;width:1px;height:29.75px;background:#d6d7d8"></div><div class="a" style="left:440.5px;top:868.5px;width:1px;height:29.75px;background:#d6d7d8"></div><div class="a" style="left:440.5px;top:898.25px;width:1px;height:29.75px;background:#d6d7d8"></div><div class="a" style="left:440.5px;top:928px;width:1px;height:29.75px;background:#d6d7d8"></div><div class="a" style="left:440.5px;top:957.75px;width:1px;height:29.75px;background:#d6d7d8"></div><div class="a" style="left:440.5px;top:987.5px;width:1px;height:29.75px;background:#d6d7d8"></div><div class="a" style="left:440.5px;top:1017.25px;width:1px;height:29.75px;background:#d6d7d8"></div><div class="a" style="left:440.5px;top:1076.75px;width:1px;height:29.75px;background:#d6d7d8"></div><div class="a" style="left:440.5px;top:1106.5px;width:1px;height:29.75px;background:#d6d7d8"></div><div class="a" style="left:440.5px;top:1136.25px;width:1px;height:29.75px;background:#d6d7d8"></div><div class="a" style="left:440.5px;top:1166px;width:1px;height:29.75px;background:#d6d7d8"></div><div class="a" style="left:440.5px;top:1195.75px;width:1px;height:29.75px;background:#d6d7d8"></div><div class="a" style="left:440.5px;top:1225.5px;width:1px;height:29.75px;background:#d6d7d8"></div><div class="a" style="left:440.5px;top:1255.25px;width:1px;height:29.75px;background:#d6d7d8"></div><div class="a" style="left:440.5px;top:1285px;width:1px;height:29.75px;background:#d6d7d8"></div><div class="a" style="left:440.5px;top:1314.75px;width:1px;height:29.75px;background:#d6d7d8"></div><div class="a" style="left:440.5px;top:1344.5px;width:1px;height:24.5px;background:#d6d7d8"></div><div class="a" style="left:856.9px;top:214px;width:1px;height:29.75px;background:#d6d7d8"></div><div class="a" style="left:856.9px;top:243.75px;width:1px;height:29.75px;background:#d6d7d8"></div><div class="a" style="left:856.9px;top:273.5px;width:1px;height:29.75px;background:#d6d7d8"></div><div class="a" style="left:856.9px;top:303.25px;width:1px;height:29.75px;background:#d6d7d8"></div><div class="a" style="left:856.9px;top:333px;width:1px;height:29.75px;background:#d6d7d8"></div><div class="a" style="left:856.9px;top:422.25px;width:1px;height:29.75px;background:#d6d7d8"></div><div class="a" style="left:856.9px;top:452px;width:1px;height:29.75px;background:#d6d7d8"></div><div class="a" style="left:856.9px;top:481.75px;width:1px;height:29.75px;background:#d6d7d8"></div><div class="a" style="left:856.9px;top:511.5px;width:1px;height:29.75px;background:#d6d7d8"></div><div class="a" style="left:856.9px;top:541.25px;width:1px;height:29.75px;background:#d6d7d8"></div><div class="a" style="left:856.9px;top:571px;width:1px;height:29.75px;background:#d6d7d8"></div><div class="a" style="left:856.9px;top:600.75px;width:1px;height:29.75px;background:#d6d7d8"></div><div class="a" style="left:856.9px;top:630.5px;width:1px;height:29.75px;background:#d6d7d8"></div><div class="a" style="left:856.9px;top:660.25px;width:1px;height:29.75px;background:#d6d7d8"></div><div class="a" style="left:856.9px;top:690px;width:1px;height:29.75px;background:#d6d7d8"></div><div class="a" style="left:856.9px;top:719.75px;width:1px;height:29.75px;background:#d6d7d8"></div><div class="a" style="left:856.9px;top:749.5px;width:1px;height:29.75px;background:#d6d7d8"></div><div class="a" style="left:856.9px;top:779.25px;width:1px;height:29.75px;background:#d6d7d8"></div><div class="a" style="left:856.9px;top:809px;width:1px;height:29.75px;background:#d6d7d8"></div><div class="a" style="left:856.9px;top:838.75px;width:1px;height:29.75px;background:#d6d7d8"></div><div class="a" style="left:856.9px;top:868.5px;width:1px;height:29.75px;background:#d6d7d8"></div><div class="a" style="left:856.9px;top:898.25px;width:1px;height:29.75px;background:#d6d7d8"></div><div class="a" style="left:856.9px;top:928px;width:1px;height:29.75px;background:#d6d7d8"></div><div class="a" style="left:856.9px;top:957.75px;width:1px;height:29.75px;background:#d6d7d8"></div><div class="a" style="left:856.9px;top:987.5px;width:1px;height:29.75px;background:#d6d7d8"></div><div class="a" style="left:856.9px;top:1017.25px;width:1px;height:29.75px;background:#d6d7d8"></div><div class="a" style="left:856.9px;top:1076.75px;width:1px;height:29.75px;background:#d6d7d8"></div><div class="a" style="left:856.9px;top:1106.5px;width:1px;height:29.75px;background:#d6d7d8"></div><div class="a" style="left:856.9px;top:1136.25px;width:1px;height:29.75px;background:#d6d7d8"></div><div class="a" style="left:856.9px;top:1166px;width:1px;height:29.75px;background:#d6d7d8"></div><div class="a" style="left:856.9px;top:1195.75px;width:1px;height:29.75px;background:#d6d7d8"></div><div class="a" style="left:856.9px;top:1225.5px;width:1px;height:29.75px;background:#d6d7d8"></div><div class="a" style="left:856.9px;top:1255.25px;width:1px;height:29.75px;background:#d6d7d8"></div><div class="a" style="left:856.9px;top:1285px;width:1px;height:29.75px;background:#d6d7d8"></div><div class="a" style="left:856.9px;top:1314.75px;width:1px;height:29.75px;background:#d6d7d8"></div><div class="a" style="left:856.9px;top:1344.5px;width:1px;height:24.5px;background:#d6d7d8"></div><div class="a" style="left:907.7px;top:214px;width:1px;height:29.75px;background:#d6d7d8"></div><div class="a" style="left:907.7px;top:243.75px;width:1px;height:29.75px;background:#d6d7d8"></div><div class="a" style="left:907.7px;top:273.5px;width:1px;height:29.75px;background:#d6d7d8"></div><div class="a" style="left:907.7px;top:303.25px;width:1px;height:29.75px;background:#d6d7d8"></div><div class="a" style="left:907.7px;top:333px;width:1px;height:29.75px;background:#d6d7d8"></div><div class="a" style="left:907.2px;top:362.75px;width:1.6px;height:29.75px;background:#fff"></div><div class="a" style="left:907.2px;top:392.5px;width:1.6px;height:29.75px;background:#fff"></div><div class="a" style="left:907.7px;top:422.25px;width:1px;height:29.75px;background:#d6d7d8"></div><div class="a" style="left:907.7px;top:452px;width:1px;height:29.75px;background:#d6d7d8"></div><div class="a" style="left:907.7px;top:481.75px;width:1px;height:29.75px;background:#d6d7d8"></div><div class="a" style="left:907.7px;top:511.5px;width:1px;height:29.75px;background:#d6d7d8"></div><div class="a" style="left:907.7px;top:541.25px;width:1px;height:29.75px;background:#d6d7d8"></div><div class="a" style="left:907.7px;top:571px;width:1px;height:29.75px;background:#d6d7d8"></div><div class="a" style="left:907.7px;top:600.75px;width:1px;height:29.75px;background:#d6d7d8"></div><div class="a" style="left:907.7px;top:630.5px;width:1px;height:29.75px;background:#d6d7d8"></div><div class="a" style="left:907.7px;top:660.25px;width:1px;height:29.75px;background:#d6d7d8"></div><div class="a" style="left:907.7px;top:690px;width:1px;height:29.75px;background:#d6d7d8"></div><div class="a" style="left:907.7px;top:719.75px;width:1px;height:29.75px;background:#d6d7d8"></div><div class="a" style="left:907.7px;top:749.5px;width:1px;height:29.75px;background:#d6d7d8"></div><div class="a" style="left:907.7px;top:779.25px;width:1px;height:29.75px;background:#d6d7d8"></div><div class="a" style="left:907.7px;top:809px;width:1px;height:29.75px;background:#d6d7d8"></div><div class="a" style="left:907.7px;top:838.75px;width:1px;height:29.75px;background:#d6d7d8"></div><div class="a" style="left:907.7px;top:868.5px;width:1px;height:29.75px;background:#d6d7d8"></div><div class="a" style="left:907.7px;top:898.25px;width:1px;height:29.75px;background:#d6d7d8"></div><div class="a" style="left:907.7px;top:928px;width:1px;height:29.75px;background:#d6d7d8"></div><div class="a" style="left:907.7px;top:957.75px;width:1px;height:29.75px;background:#d6d7d8"></div><div class="a" style="left:907.7px;top:987.5px;width:1px;height:29.75px;background:#d6d7d8"></div><div class="a" style="left:907.7px;top:1017.25px;width:1px;height:29.75px;background:#d6d7d8"></div><div class="a" style="left:907.7px;top:1076.75px;width:1px;height:29.75px;background:#d6d7d8"></div><div class="a" style="left:907.7px;top:1106.5px;width:1px;height:29.75px;background:#d6d7d8"></div><div class="a" style="left:907.7px;top:1136.25px;width:1px;height:29.75px;background:#d6d7d8"></div><div class="a" style="left:907.7px;top:1166px;width:1px;height:29.75px;background:#d6d7d8"></div><div class="a" style="left:907.7px;top:1195.75px;width:1px;height:29.75px;background:#d6d7d8"></div><div class="a" style="left:907.7px;top:1225.5px;width:1px;height:29.75px;background:#d6d7d8"></div><div class="a" style="left:907.7px;top:1255.25px;width:1px;height:29.75px;background:#d6d7d8"></div><div class="a" style="left:907.7px;top:1285px;width:1px;height:29.75px;background:#d6d7d8"></div><div class="a" style="left:907.7px;top:1314.75px;width:1px;height:29.75px;background:#d6d7d8"></div><div class="a" style="left:907.7px;top:1344.5px;width:1px;height:24.5px;background:#d6d7d8"></div><div class="a" style="left:1051px;top:214px;width:1px;height:29.75px;background:#d6d7d8"></div><div class="a" style="left:1051px;top:243.75px;width:1px;height:29.75px;background:#d6d7d8"></div><div class="a" style="left:1051px;top:273.5px;width:1px;height:29.75px;background:#d6d7d8"></div><div class="a" style="left:1051px;top:303.25px;width:1px;height:29.75px;background:#d6d7d8"></div><div class="a" style="left:1051px;top:333px;width:1px;height:29.75px;background:#d6d7d8"></div><div class="a" style="left:1050.5px;top:362.75px;width:1.6px;height:29.75px;background:#fff"></div><div class="a" style="left:1050.5px;top:392.5px;width:1.6px;height:29.75px;background:#fff"></div><div class="a" style="left:1051px;top:452px;width:1px;height:29.75px;background:#d6d7d8"></div><div class="a" style="left:1051px;top:481.75px;width:1px;height:29.75px;background:#d6d7d8"></div><div class="a" style="left:1051px;top:511.5px;width:1px;height:29.75px;background:#d6d7d8"></div><div class="a" style="left:1051px;top:541.25px;width:1px;height:29.75px;background:#d6d7d8"></div><div class="a" style="left:1051px;top:571px;width:1px;height:29.75px;background:#d6d7d8"></div><div class="a" style="left:1051px;top:600.75px;width:1px;height:29.75px;background:#d6d7d8"></div><div class="a" style="left:1051px;top:630.5px;width:1px;height:29.75px;background:#d6d7d8"></div><div class="a" style="left:1051px;top:660.25px;width:1px;height:29.75px;background:#d6d7d8"></div><div class="a" style="left:1051px;top:690px;width:1px;height:29.75px;background:#d6d7d8"></div><div class="a" style="left:1051px;top:719.75px;width:1px;height:29.75px;background:#d6d7d8"></div><div class="a" style="left:1051px;top:749.5px;width:1px;height:29.75px;background:#d6d7d8"></div><div class="a" style="left:1051px;top:779.25px;width:1px;height:29.75px;background:#d6d7d8"></div><div class="a" style="left:1051px;top:809px;width:1px;height:29.75px;background:#d6d7d8"></div><div class="a" style="left:1051px;top:838.75px;width:1px;height:29.75px;background:#d6d7d8"></div><div class="a" style="left:1051px;top:868.5px;width:1px;height:29.75px;background:#d6d7d8"></div><div class="a" style="left:1051px;top:898.25px;width:1px;height:29.75px;background:#d6d7d8"></div><div class="a" style="left:1051px;top:928px;width:1px;height:29.75px;background:#d6d7d8"></div><div class="a" style="left:1051px;top:957.75px;width:1px;height:29.75px;background:#d6d7d8"></div><div class="a" style="left:1051px;top:987.5px;width:1px;height:29.75px;background:#d6d7d8"></div><div class="a" style="left:1051px;top:1017.25px;width:1px;height:29.75px;background:#d6d7d8"></div><div class="a" style="left:1051px;top:1076.75px;width:1px;height:29.75px;background:#d6d7d8"></div><div class="a" style="left:1051px;top:1106.5px;width:1px;height:29.75px;background:#d6d7d8"></div><div class="a" style="left:1051px;top:1136.25px;width:1px;height:29.75px;background:#d6d7d8"></div><div class="a" style="left:1051px;top:1166px;width:1px;height:29.75px;background:#d6d7d8"></div><div class="a" style="left:1051px;top:1195.75px;width:1px;height:29.75px;background:#d6d7d8"></div><div class="a" style="left:1051px;top:1225.5px;width:1px;height:29.75px;background:#d6d7d8"></div><div class="a" style="left:1051px;top:1255.25px;width:1px;height:29.75px;background:#d6d7d8"></div><div class="a" style="left:1051px;top:1285px;width:1px;height:29.75px;background:#d6d7d8"></div><div class="a" style="left:1051px;top:1314.75px;width:1px;height:29.75px;background:#d6d7d8"></div><div class="a" style="left:1051px;top:1344.5px;width:1px;height:24.5px;background:#d6d7d8"></div><div class="a" style="left:1193.7px;top:214px;width:1px;height:29.75px;background:#d6d7d8"></div><div class="a" style="left:1193.7px;top:243.75px;width:1px;height:29.75px;background:#d6d7d8"></div><div class="a" style="left:1193.7px;top:273.5px;width:1px;height:29.75px;background:#d6d7d8"></div><div class="a" style="left:1193.7px;top:303.25px;width:1px;height:29.75px;background:#d6d7d8"></div><div class="a" style="left:1193.7px;top:333px;width:1px;height:29.75px;background:#d6d7d8"></div><div class="a" style="left:1193.2px;top:362.75px;width:1.6px;height:29.75px;background:#fff"></div><div class="a" style="left:1193.2px;top:392.5px;width:1.6px;height:29.75px;background:#fff"></div><div class="a" style="left:1193.7px;top:452px;width:1px;height:29.75px;background:#d6d7d8"></div><div class="a" style="left:1193.7px;top:481.75px;width:1px;height:29.75px;background:#d6d7d8"></div><div class="a" style="left:1193.7px;top:511.5px;width:1px;height:29.75px;background:#d6d7d8"></div><div class="a" style="left:1193.7px;top:541.25px;width:1px;height:29.75px;background:#d6d7d8"></div><div class="a" style="left:1193.7px;top:571px;width:1px;height:29.75px;background:#d6d7d8"></div><div class="a" style="left:1193.7px;top:600.75px;width:1px;height:29.75px;background:#d6d7d8"></div><div class="a" style="left:1193.7px;top:630.5px;width:1px;height:29.75px;background:#d6d7d8"></div><div class="a" style="left:1193.7px;top:660.25px;width:1px;height:29.75px;background:#d6d7d8"></div><div class="a" style="left:1193.7px;top:690px;width:1px;height:29.75px;background:#d6d7d8"></div><div class="a" style="left:1193.7px;top:719.75px;width:1px;height:29.75px;background:#d6d7d8"></div><div class="a" style="left:1193.7px;top:749.5px;width:1px;height:29.75px;background:#d6d7d8"></div><div class="a" style="left:1193.7px;top:779.25px;width:1px;height:29.75px;background:#d6d7d8"></div><div class="a" style="left:1193.7px;top:809px;width:1px;height:29.75px;background:#d6d7d8"></div><div class="a" style="left:1193.7px;top:838.75px;width:1px;height:29.75px;background:#d6d7d8"></div><div class="a" style="left:1193.7px;top:868.5px;width:1px;height:29.75px;background:#d6d7d8"></div><div class="a" style="left:1193.7px;top:898.25px;width:1px;height:29.75px;background:#d6d7d8"></div><div class="a" style="left:1193.7px;top:928px;width:1px;height:29.75px;background:#d6d7d8"></div><div class="a" style="left:1193.7px;top:957.75px;width:1px;height:29.75px;background:#d6d7d8"></div><div class="a" style="left:1193.7px;top:987.5px;width:1px;height:29.75px;background:#d6d7d8"></div><div class="a" style="left:1193.7px;top:1017.25px;width:1px;height:29.75px;background:#d6d7d8"></div><div class="a" style="left:1193.7px;top:1076.75px;width:1px;height:29.75px;background:#d6d7d8"></div><div class="a" style="left:1193.7px;top:1106.5px;width:1px;height:29.75px;background:#d6d7d8"></div><div class="a" style="left:1193.7px;top:1136.25px;width:1px;height:29.75px;background:#d6d7d8"></div><div class="a" style="left:1193.7px;top:1166px;width:1px;height:29.75px;background:#d6d7d8"></div><div class="a" style="left:1193.7px;top:1195.75px;width:1px;height:29.75px;background:#d6d7d8"></div><div class="a" style="left:1193.7px;top:1225.5px;width:1px;height:29.75px;background:#d6d7d8"></div><div class="a" style="left:1193.7px;top:1255.25px;width:1px;height:29.75px;background:#d6d7d8"></div><div class="a" style="left:1193.7px;top:1285px;width:1px;height:29.75px;background:#d6d7d8"></div><div class="a" style="left:1193.7px;top:1314.75px;width:1px;height:29.75px;background:#d6d7d8"></div><div class="a" style="left:1193.7px;top:1344.5px;width:1px;height:24.5px;background:#d6d7d8"></div><div class="a" style="left:1337px;top:214px;width:1px;height:29.75px;background:#d6d7d8"></div><div class="a" style="left:1337px;top:243.75px;width:1px;height:29.75px;background:#d6d7d8"></div><div class="a" style="left:1337px;top:273.5px;width:1px;height:29.75px;background:#d6d7d8"></div><div class="a" style="left:1337px;top:303.25px;width:1px;height:29.75px;background:#d6d7d8"></div><div class="a" style="left:1337px;top:333px;width:1px;height:29.75px;background:#d6d7d8"></div><div class="a" style="left:1336.5px;top:362.75px;width:1.6px;height:29.75px;background:#fff"></div><div class="a" style="left:1336.5px;top:392.5px;width:1.6px;height:29.75px;background:#fff"></div><div class="a" style="left:1337px;top:422.25px;width:1px;height:29.75px;background:#d6d7d8"></div><div class="a" style="left:1337px;top:452px;width:1px;height:29.75px;background:#d6d7d8"></div><div class="a" style="left:1337px;top:481.75px;width:1px;height:29.75px;background:#d6d7d8"></div><div class="a" style="left:1337px;top:511.5px;width:1px;height:29.75px;background:#d6d7d8"></div><div class="a" style="left:1337px;top:541.25px;width:1px;height:29.75px;background:#d6d7d8"></div><div class="a" style="left:1337px;top:571px;width:1px;height:29.75px;background:#d6d7d8"></div><div class="a" style="left:1337px;top:600.75px;width:1px;height:29.75px;background:#d6d7d8"></div><div class="a" style="left:1337px;top:630.5px;width:1px;height:29.75px;background:#d6d7d8"></div><div class="a" style="left:1337px;top:660.25px;width:1px;height:29.75px;background:#d6d7d8"></div><div class="a" style="left:1337px;top:690px;width:1px;height:29.75px;background:#d6d7d8"></div><div class="a" style="left:1337px;top:719.75px;width:1px;height:29.75px;background:#d6d7d8"></div><div class="a" style="left:1337px;top:749.5px;width:1px;height:29.75px;background:#d6d7d8"></div><div class="a" style="left:1337px;top:779.25px;width:1px;height:29.75px;background:#d6d7d8"></div><div class="a" style="left:1337px;top:809px;width:1px;height:29.75px;background:#d6d7d8"></div><div class="a" style="left:1337px;top:838.75px;width:1px;height:29.75px;background:#d6d7d8"></div><div class="a" style="left:1337px;top:868.5px;width:1px;height:29.75px;background:#d6d7d8"></div><div class="a" style="left:1337px;top:898.25px;width:1px;height:29.75px;background:#d6d7d8"></div><div class="a" style="left:1337px;top:928px;width:1px;height:29.75px;background:#d6d7d8"></div><div class="a" style="left:1337px;top:957.75px;width:1px;height:29.75px;background:#d6d7d8"></div><div class="a" style="left:1337px;top:987.5px;width:1px;height:29.75px;background:#d6d7d8"></div><div class="a" style="left:1337px;top:1017.25px;width:1px;height:29.75px;background:#d6d7d8"></div><div class="a" style="left:1337px;top:1047px;width:1px;height:29.75px;background:#d6d7d8"></div><div class="a" style="left:1337px;top:1076.75px;width:1px;height:29.75px;background:#d6d7d8"></div><div class="a" style="left:1337px;top:1106.5px;width:1px;height:29.75px;background:#d6d7d8"></div><div class="a" style="left:1337px;top:1136.25px;width:1px;height:29.75px;background:#d6d7d8"></div><div class="a" style="left:1337px;top:1166px;width:1px;height:29.75px;background:#d6d7d8"></div><div class="a" style="left:1337px;top:1195.75px;width:1px;height:29.75px;background:#d6d7d8"></div><div class="a" style="left:1337px;top:1225.5px;width:1px;height:29.75px;background:#d6d7d8"></div><div class="a" style="left:1337px;top:1255.25px;width:1px;height:29.75px;background:#d6d7d8"></div><div class="a" style="left:1337px;top:1285px;width:1px;height:29.75px;background:#d6d7d8"></div><div class="a" style="left:1337px;top:1314.75px;width:1px;height:29.75px;background:#d6d7d8"></div><div class="a" style="left:1337px;top:1344.5px;width:1px;height:24.5px;background:#d6d7d8"></div><div class="a" style="left:1480px;top:214px;width:1px;height:29.75px;background:#d6d7d8"></div><div class="a" style="left:1480px;top:243.75px;width:1px;height:29.75px;background:#d6d7d8"></div><div class="a" style="left:1480px;top:273.5px;width:1px;height:29.75px;background:#d6d7d8"></div><div class="a" style="left:1480px;top:303.25px;width:1px;height:29.75px;background:#d6d7d8"></div><div class="a" style="left:1480px;top:333px;width:1px;height:29.75px;background:#d6d7d8"></div><div class="a" style="left:1479.5px;top:362.75px;width:1.6px;height:29.75px;background:#fff"></div><div class="a" style="left:1479.5px;top:392.5px;width:1.6px;height:29.75px;background:#fff"></div><div class="a" style="left:1480px;top:422.25px;width:1px;height:29.75px;background:#d6d7d8"></div><div class="a" style="left:1480px;top:452px;width:1px;height:29.75px;background:#d6d7d8"></div><div class="a" style="left:1480px;top:481.75px;width:1px;height:29.75px;background:#d6d7d8"></div><div class="a" style="left:1480px;top:511.5px;width:1px;height:29.75px;background:#d6d7d8"></div><div class="a" style="left:1480px;top:541.25px;width:1px;height:29.75px;background:#d6d7d8"></div><div class="a" style="left:1480px;top:571px;width:1px;height:29.75px;background:#d6d7d8"></div><div class="a" style="left:1480px;top:600.75px;width:1px;height:29.75px;background:#d6d7d8"></div><div class="a" style="left:1480px;top:630.5px;width:1px;height:29.75px;background:#d6d7d8"></div><div class="a" style="left:1480px;top:660.25px;width:1px;height:29.75px;background:#d6d7d8"></div><div class="a" style="left:1480px;top:690px;width:1px;height:29.75px;background:#d6d7d8"></div><div class="a" style="left:1480px;top:719.75px;width:1px;height:29.75px;background:#d6d7d8"></div><div class="a" style="left:1480px;top:749.5px;width:1px;height:29.75px;background:#d6d7d8"></div><div class="a" style="left:1480px;top:779.25px;width:1px;height:29.75px;background:#d6d7d8"></div><div class="a" style="left:1480px;top:809px;width:1px;height:29.75px;background:#d6d7d8"></div><div class="a" style="left:1480px;top:838.75px;width:1px;height:29.75px;background:#d6d7d8"></div><div class="a" style="left:1480px;top:868.5px;width:1px;height:29.75px;background:#d6d7d8"></div><div class="a" style="left:1480px;top:898.25px;width:1px;height:29.75px;background:#d6d7d8"></div><div class="a" style="left:1480px;top:928px;width:1px;height:29.75px;background:#d6d7d8"></div><div class="a" style="left:1480px;top:957.75px;width:1px;height:29.75px;background:#d6d7d8"></div><div class="a" style="left:1480px;top:987.5px;width:1px;height:29.75px;background:#d6d7d8"></div><div class="a" style="left:1480px;top:1017.25px;width:1px;height:29.75px;background:#d6d7d8"></div><div class="a" style="left:1480px;top:1047px;width:1px;height:29.75px;background:#d6d7d8"></div><div class="a" style="left:1480px;top:1076.75px;width:1px;height:29.75px;background:#d6d7d8"></div><div class="a" style="left:1480px;top:1106.5px;width:1px;height:29.75px;background:#d6d7d8"></div><div class="a" style="left:1480px;top:1136.25px;width:1px;height:29.75px;background:#d6d7d8"></div><div class="a" style="left:1480px;top:1166px;width:1px;height:29.75px;background:#d6d7d8"></div><div class="a" style="left:1480px;top:1195.75px;width:1px;height:29.75px;background:#d6d7d8"></div><div class="a" style="left:1480px;top:1225.5px;width:1px;height:29.75px;background:#d6d7d8"></div><div class="a" style="left:1480px;top:1255.25px;width:1px;height:29.75px;background:#d6d7d8"></div><div class="a" style="left:1480px;top:1285px;width:1px;height:29.75px;background:#d6d7d8"></div><div class="a" style="left:1480px;top:1314.75px;width:1px;height:29.75px;background:#d6d7d8"></div><div class="a" style="left:1480px;top:1344.5px;width:1px;height:24.5px;background:#d6d7d8"></div><div class="a" style="left:1622.8px;top:214px;width:1px;height:29.75px;background:#d6d7d8"></div><div class="a" style="left:1622.8px;top:243.75px;width:1px;height:29.75px;background:#d6d7d8"></div><div class="a" style="left:1622.8px;top:303.25px;width:1px;height:29.75px;background:#d6d7d8"></div><div class="a" style="left:1622.8px;top:333px;width:1px;height:29.75px;background:#d6d7d8"></div><div class="a" style="left:1622.8px;top:422.25px;width:1px;height:29.75px;background:#d6d7d8"></div><div class="a" style="left:1622.8px;top:452px;width:1px;height:29.75px;background:#d6d7d8"></div><div class="a" style="left:1622.8px;top:481.75px;width:1px;height:29.75px;background:#d6d7d8"></div><div class="a" style="left:1622.8px;top:511.5px;width:1px;height:29.75px;background:#d6d7d8"></div><div class="a" style="left:1622.8px;top:541.25px;width:1px;height:29.75px;background:#d6d7d8"></div><div class="a" style="left:1622.8px;top:571px;width:1px;height:29.75px;background:#d6d7d8"></div><div class="a" style="left:1622.8px;top:600.75px;width:1px;height:29.75px;background:#d6d7d8"></div><div class="a" style="left:1622.8px;top:630.5px;width:1px;height:29.75px;background:#d6d7d8"></div><div class="a" style="left:1622.8px;top:660.25px;width:1px;height:29.75px;background:#d6d7d8"></div><div class="a" style="left:1622.8px;top:690px;width:1px;height:29.75px;background:#d6d7d8"></div><div class="a" style="left:1622.8px;top:719.75px;width:1px;height:29.75px;background:#d6d7d8"></div><div class="a" style="left:1622.8px;top:749.5px;width:1px;height:29.75px;background:#d6d7d8"></div><div class="a" style="left:1622.8px;top:779.25px;width:1px;height:29.75px;background:#d6d7d8"></div><div class="a" style="left:1622.8px;top:809px;width:1px;height:29.75px;background:#d6d7d8"></div><div class="a" style="left:1622.8px;top:838.75px;width:1px;height:29.75px;background:#d6d7d8"></div><div class="a" style="left:1622.8px;top:868.5px;width:1px;height:29.75px;background:#d6d7d8"></div><div class="a" style="left:1622.8px;top:898.25px;width:1px;height:29.75px;background:#d6d7d8"></div><div class="a" style="left:1622.8px;top:928px;width:1px;height:29.75px;background:#d6d7d8"></div><div class="a" style="left:1622.8px;top:957.75px;width:1px;height:29.75px;background:#d6d7d8"></div><div class="a" style="left:1622.8px;top:987.5px;width:1px;height:29.75px;background:#d6d7d8"></div><div class="a" style="left:1622.8px;top:1017.25px;width:1px;height:29.75px;background:#d6d7d8"></div><div class="a" style="left:1622.8px;top:1047px;width:1px;height:29.75px;background:#d6d7d8"></div><div class="a" style="left:1622.8px;top:1076.75px;width:1px;height:29.75px;background:#d6d7d8"></div><div class="a" style="left:1622.8px;top:1106.5px;width:1px;height:29.75px;background:#d6d7d8"></div><div class="a" style="left:1622.8px;top:1136.25px;width:1px;height:29.75px;background:#d6d7d8"></div><div class="a" style="left:1622.8px;top:1166px;width:1px;height:29.75px;background:#d6d7d8"></div><div class="a" style="left:1622.8px;top:1195.75px;width:1px;height:29.75px;background:#d6d7d8"></div><div class="a" style="left:1622.8px;top:1225.5px;width:1px;height:29.75px;background:#d6d7d8"></div><div class="a" style="left:1622.8px;top:1255.25px;width:1px;height:29.75px;background:#d6d7d8"></div><div class="a" style="left:1622.8px;top:1285px;width:1px;height:29.75px;background:#d6d7d8"></div><div class="a" style="left:1622.8px;top:1314.75px;width:1px;height:29.75px;background:#d6d7d8"></div><div class="a" style="left:1622.8px;top:1344.5px;width:1px;height:24.5px;background:#d6d7d8"></div><div class="a" style="left:1670.9px;top:214px;width:1px;height:29.75px;background:#d6d7d8"></div><div class="a" style="left:1670.9px;top:243.75px;width:1px;height:29.75px;background:#d6d7d8"></div><div class="a" style="left:1670.9px;top:303.25px;width:1px;height:29.75px;background:#d6d7d8"></div><div class="a" style="left:1670.9px;top:333px;width:1px;height:29.75px;background:#d6d7d8"></div><div class="a" style="left:1670.9px;top:362.75px;width:1px;height:29.75px;background:#d6d7d8"></div><div class="a" style="left:1670.9px;top:392.5px;width:1px;height:29.75px;background:#d6d7d8"></div><div class="a" style="left:1670.9px;top:422.25px;width:1px;height:29.75px;background:#d6d7d8"></div><div class="a" style="left:1670.9px;top:452px;width:1px;height:29.75px;background:#d6d7d8"></div><div class="a" style="left:1670.9px;top:481.75px;width:1px;height:29.75px;background:#d6d7d8"></div><div class="a" style="left:1670.9px;top:511.5px;width:1px;height:29.75px;background:#d6d7d8"></div><div class="a" style="left:1670.9px;top:541.25px;width:1px;height:29.75px;background:#d6d7d8"></div><div class="a" style="left:1670.9px;top:571px;width:1px;height:29.75px;background:#d6d7d8"></div><div class="a" style="left:1670.9px;top:600.75px;width:1px;height:29.75px;background:#d6d7d8"></div><div class="a" style="left:1670.9px;top:630.5px;width:1px;height:29.75px;background:#d6d7d8"></div><div class="a" style="left:1670.9px;top:660.25px;width:1px;height:29.75px;background:#d6d7d8"></div><div class="a" style="left:1670.9px;top:690px;width:1px;height:29.75px;background:#d6d7d8"></div><div class="a" style="left:1670.9px;top:719.75px;width:1px;height:29.75px;background:#d6d7d8"></div><div class="a" style="left:1670.9px;top:749.5px;width:1px;height:29.75px;background:#d6d7d8"></div><div class="a" style="left:1670.9px;top:779.25px;width:1px;height:29.75px;background:#d6d7d8"></div><div class="a" style="left:1670.9px;top:809px;width:1px;height:29.75px;background:#d6d7d8"></div><div class="a" style="left:1670.9px;top:838.75px;width:1px;height:29.75px;background:#d6d7d8"></div><div class="a" style="left:1670.9px;top:868.5px;width:1px;height:29.75px;background:#d6d7d8"></div><div class="a" style="left:1670.9px;top:898.25px;width:1px;height:29.75px;background:#d6d7d8"></div><div class="a" style="left:1670.9px;top:928px;width:1px;height:29.75px;background:#d6d7d8"></div><div class="a" style="left:1670.9px;top:957.75px;width:1px;height:29.75px;background:#d6d7d8"></div><div class="a" style="left:1670.9px;top:987.5px;width:1px;height:29.75px;background:#d6d7d8"></div><div class="a" style="left:1670.9px;top:1017.25px;width:1px;height:29.75px;background:#d6d7d8"></div><div class="a" style="left:1670.9px;top:1047px;width:1px;height:29.75px;background:#d6d7d8"></div><div class="a" style="left:1670.9px;top:1076.75px;width:1px;height:29.75px;background:#d6d7d8"></div><div class="a" style="left:1670.9px;top:1106.5px;width:1px;height:29.75px;background:#d6d7d8"></div><div class="a" style="left:1670.9px;top:1136.25px;width:1px;height:29.75px;background:#d6d7d8"></div><div class="a" style="left:1670.9px;top:1166px;width:1px;height:29.75px;background:#d6d7d8"></div><div class="a" style="left:1670.9px;top:1195.75px;width:1px;height:29.75px;background:#d6d7d8"></div><div class="a" style="left:1670.9px;top:1225.5px;width:1px;height:29.75px;background:#d6d7d8"></div><div class="a" style="left:1670.9px;top:1255.25px;width:1px;height:29.75px;background:#d6d7d8"></div><div class="a" style="left:1670.9px;top:1285px;width:1px;height:29.75px;background:#d6d7d8"></div><div class="a" style="left:1670.9px;top:1314.75px;width:1px;height:29.75px;background:#d6d7d8"></div><div class="a" style="left:1670.9px;top:1344.5px;width:1px;height:24.5px;background:#d6d7d8"></div><div class="a" style="left:1814px;top:214px;width:1px;height:29.75px;background:#d6d7d8"></div><div class="a" style="left:1814px;top:243.75px;width:1px;height:29.75px;background:#d6d7d8"></div><div class="a" style="left:1814px;top:273.5px;width:1px;height:29.75px;background:#d6d7d8"></div><div class="a" style="left:1814px;top:303.25px;width:1px;height:29.75px;background:#d6d7d8"></div><div class="a" style="left:1814px;top:333px;width:1px;height:29.75px;background:#d6d7d8"></div><div class="a" style="left:1813.5px;top:362.75px;width:1.6px;height:29.75px;background:#fff"></div><div class="a" style="left:1813.5px;top:392.5px;width:1.6px;height:29.75px;background:#fff"></div><div class="a" style="left:1814px;top:422.25px;width:1px;height:29.75px;background:#d6d7d8"></div><div class="a" style="left:1814px;top:452px;width:1px;height:29.75px;background:#d6d7d8"></div><div class="a" style="left:1814px;top:481.75px;width:1px;height:29.75px;background:#d6d7d8"></div><div class="a" style="left:1814px;top:511.5px;width:1px;height:29.75px;background:#d6d7d8"></div><div class="a" style="left:1814px;top:541.25px;width:1px;height:29.75px;background:#d6d7d8"></div><div class="a" style="left:1814px;top:571px;width:1px;height:29.75px;background:#d6d7d8"></div><div class="a" style="left:1814px;top:600.75px;width:1px;height:29.75px;background:#d6d7d8"></div><div class="a" style="left:1814px;top:630.5px;width:1px;height:29.75px;background:#d6d7d8"></div><div class="a" style="left:1814px;top:660.25px;width:1px;height:29.75px;background:#d6d7d8"></div><div class="a" style="left:1814px;top:690px;width:1px;height:29.75px;background:#d6d7d8"></div><div class="a" style="left:1814px;top:719.75px;width:1px;height:29.75px;background:#d6d7d8"></div><div class="a" style="left:1814px;top:749.5px;width:1px;height:29.75px;background:#d6d7d8"></div><div class="a" style="left:1814px;top:779.25px;width:1px;height:29.75px;background:#d6d7d8"></div><div class="a" style="left:1814px;top:809px;width:1px;height:29.75px;background:#d6d7d8"></div><div class="a" style="left:1814px;top:838.75px;width:1px;height:29.75px;background:#d6d7d8"></div><div class="a" style="left:1814px;top:868.5px;width:1px;height:29.75px;background:#d6d7d8"></div><div class="a" style="left:1814px;top:898.25px;width:1px;height:29.75px;background:#d6d7d8"></div><div class="a" style="left:1814px;top:928px;width:1px;height:29.75px;background:#d6d7d8"></div><div class="a" style="left:1814px;top:957.75px;width:1px;height:29.75px;background:#d6d7d8"></div><div class="a" style="left:1814px;top:987.5px;width:1px;height:29.75px;background:#d6d7d8"></div><div class="a" style="left:1814px;top:1017.25px;width:1px;height:29.75px;background:#d6d7d8"></div><div class="a" style="left:1814px;top:1047px;width:1px;height:29.75px;background:#d6d7d8"></div><div class="a" style="left:1814px;top:1076.75px;width:1px;height:29.75px;background:#d6d7d8"></div><div class="a" style="left:1814px;top:1106.5px;width:1px;height:29.75px;background:#d6d7d8"></div><div class="a" style="left:1814px;top:1136.25px;width:1px;height:29.75px;background:#d6d7d8"></div><div class="a" style="left:1814px;top:1166px;width:1px;height:29.75px;background:#d6d7d8"></div><div class="a" style="left:1814px;top:1195.75px;width:1px;height:29.75px;background:#d6d7d8"></div><div class="a" style="left:1814px;top:1225.5px;width:1px;height:29.75px;background:#d6d7d8"></div><div class="a" style="left:1814px;top:1255.25px;width:1px;height:29.75px;background:#d6d7d8"></div><div class="a" style="left:1814px;top:1285px;width:1px;height:29.75px;background:#d6d7d8"></div><div class="a" style="left:1814px;top:1314.75px;width:1px;height:29.75px;background:#d6d7d8"></div><div class="a" style="left:1814px;top:1344.5px;width:1px;height:24.5px;background:#d6d7d8"></div><div class="a" style="left:1956.9px;top:214px;width:1px;height:29.75px;background:#d6d7d8"></div><div class="a" style="left:1956.9px;top:243.75px;width:1px;height:29.75px;background:#d6d7d8"></div><div class="a" style="left:1956.9px;top:273.5px;width:1px;height:29.75px;background:#d6d7d8"></div><div class="a" style="left:1956.9px;top:303.25px;width:1px;height:29.75px;background:#d6d7d8"></div><div class="a" style="left:1956.9px;top:333px;width:1px;height:29.75px;background:#d6d7d8"></div><div class="a" style="left:1956.9px;top:362.75px;width:1px;height:29.75px;background:#d6d7d8"></div><div class="a" style="left:1956.9px;top:392.5px;width:1px;height:29.75px;background:#d6d7d8"></div><div class="a" style="left:1956.9px;top:422.25px;width:1px;height:29.75px;background:#d6d7d8"></div><div class="a" style="left:1956.9px;top:452px;width:1px;height:29.75px;background:#d6d7d8"></div><div class="a" style="left:1956.9px;top:481.75px;width:1px;height:29.75px;background:#d6d7d8"></div><div class="a" style="left:1956.9px;top:511.5px;width:1px;height:29.75px;background:#d6d7d8"></div><div class="a" style="left:1956.9px;top:541.25px;width:1px;height:29.75px;background:#d6d7d8"></div><div class="a" style="left:1956.9px;top:571px;width:1px;height:29.75px;background:#d6d7d8"></div><div class="a" style="left:1956.9px;top:600.75px;width:1px;height:29.75px;background:#d6d7d8"></div><div class="a" style="left:1956.9px;top:630.5px;width:1px;height:29.75px;background:#d6d7d8"></div><div class="a" style="left:1956.9px;top:660.25px;width:1px;height:29.75px;background:#d6d7d8"></div><div class="a" style="left:1956.9px;top:690px;width:1px;height:29.75px;background:#d6d7d8"></div><div class="a" style="left:1956.9px;top:719.75px;width:1px;height:29.75px;background:#d6d7d8"></div><div class="a" style="left:1956.9px;top:749.5px;width:1px;height:29.75px;background:#d6d7d8"></div><div class="a" style="left:1956.9px;top:779.25px;width:1px;height:29.75px;background:#d6d7d8"></div><div class="a" style="left:1956.9px;top:809px;width:1px;height:29.75px;background:#d6d7d8"></div><div class="a" style="left:1956.9px;top:838.75px;width:1px;height:29.75px;background:#d6d7d8"></div><div class="a" style="left:1956.9px;top:868.5px;width:1px;height:29.75px;background:#d6d7d8"></div><div class="a" style="left:1956.9px;top:898.25px;width:1px;height:29.75px;background:#d6d7d8"></div><div class="a" style="left:1956.9px;top:928px;width:1px;height:29.75px;background:#d6d7d8"></div><div class="a" style="left:1956.9px;top:957.75px;width:1px;height:29.75px;background:#d6d7d8"></div><div class="a" style="left:1956.9px;top:987.5px;width:1px;height:29.75px;background:#d6d7d8"></div><div class="a" style="left:1956.9px;top:1017.25px;width:1px;height:29.75px;background:#d6d7d8"></div><div class="a" style="left:1956.9px;top:1047px;width:1px;height:29.75px;background:#d6d7d8"></div><div class="a" style="left:1956.9px;top:1076.75px;width:1px;height:29.75px;background:#d6d7d8"></div><div class="a" style="left:1956.9px;top:1106.5px;width:1px;height:29.75px;background:#d6d7d8"></div><div class="a" style="left:1956.9px;top:1136.25px;width:1px;height:29.75px;background:#d6d7d8"></div><div class="a" style="left:1956.9px;top:1166px;width:1px;height:29.75px;background:#d6d7d8"></div><div class="a" style="left:1956.9px;top:1195.75px;width:1px;height:29.75px;background:#d6d7d8"></div><div class="a" style="left:1956.9px;top:1225.5px;width:1px;height:29.75px;background:#d6d7d8"></div><div class="a" style="left:1956.9px;top:1255.25px;width:1px;height:29.75px;background:#d6d7d8"></div><div class="a" style="left:1956.9px;top:1285px;width:1px;height:29.75px;background:#d6d7d8"></div><div class="a" style="left:1956.9px;top:1314.75px;width:1px;height:29.75px;background:#d6d7d8"></div><div class="a" style="left:1956.9px;top:1344.5px;width:1px;height:24.5px;background:#d6d7d8"></div><div class="a" style="left:1999.2px;top:214px;width:1px;height:29.75px;background:#d6d7d8"></div><div class="a" style="left:1999.2px;top:243.75px;width:1px;height:29.75px;background:#d6d7d8"></div><div class="a" style="left:1999.2px;top:273.5px;width:1px;height:29.75px;background:#d6d7d8"></div><div class="a" style="left:1999.2px;top:303.25px;width:1px;height:29.75px;background:#d6d7d8"></div><div class="a" style="left:1999.2px;top:333px;width:1px;height:29.75px;background:#d6d7d8"></div><div class="a" style="left:1999.2px;top:362.75px;width:1px;height:29.75px;background:#d6d7d8"></div><div class="a" style="left:1999.2px;top:392.5px;width:1px;height:29.75px;background:#d6d7d8"></div><div class="a" style="left:1999.2px;top:422.25px;width:1px;height:29.75px;background:#d6d7d8"></div><div class="a" style="left:1999.2px;top:452px;width:1px;height:29.75px;background:#d6d7d8"></div><div class="a" style="left:1999.2px;top:481.75px;width:1px;height:29.75px;background:#d6d7d8"></div><div class="a" style="left:1999.2px;top:511.5px;width:1px;height:29.75px;background:#d6d7d8"></div><div class="a" style="left:1999.2px;top:541.25px;width:1px;height:29.75px;background:#d6d7d8"></div><div class="a" style="left:1999.2px;top:571px;width:1px;height:29.75px;background:#d6d7d8"></div><div class="a" style="left:1999.2px;top:600.75px;width:1px;height:29.75px;background:#d6d7d8"></div><div class="a" style="left:1999.2px;top:630.5px;width:1px;height:29.75px;background:#d6d7d8"></div><div class="a" style="left:1999.2px;top:660.25px;width:1px;height:29.75px;background:#d6d7d8"></div><div class="a" style="left:1999.2px;top:690px;width:1px;height:29.75px;background:#d6d7d8"></div><div class="a" style="left:1999.2px;top:719.75px;width:1px;height:29.75px;background:#d6d7d8"></div><div class="a" style="left:1999.2px;top:749.5px;width:1px;height:29.75px;background:#d6d7d8"></div><div class="a" style="left:1999.2px;top:779.25px;width:1px;height:29.75px;background:#d6d7d8"></div><div class="a" style="left:1999.2px;top:809px;width:1px;height:29.75px;background:#d6d7d8"></div><div class="a" style="left:1999.2px;top:838.75px;width:1px;height:29.75px;background:#d6d7d8"></div><div class="a" style="left:1999.2px;top:868.5px;width:1px;height:29.75px;background:#d6d7d8"></div><div class="a" style="left:1999.2px;top:898.25px;width:1px;height:29.75px;background:#d6d7d8"></div><div class="a" style="left:1999.2px;top:928px;width:1px;height:29.75px;background:#d6d7d8"></div><div class="a" style="left:1999.2px;top:957.75px;width:1px;height:29.75px;background:#d6d7d8"></div><div class="a" style="left:1999.2px;top:987.5px;width:1px;height:29.75px;background:#d6d7d8"></div><div class="a" style="left:1999.2px;top:1017.25px;width:1px;height:29.75px;background:#d6d7d8"></div><div class="a" style="left:1999.2px;top:1047px;width:1px;height:29.75px;background:#d6d7d8"></div><div class="a" style="left:1999.2px;top:1076.75px;width:1px;height:29.75px;background:#d6d7d8"></div><div class="a" style="left:1999.2px;top:1106.5px;width:1px;height:29.75px;background:#d6d7d8"></div><div class="a" style="left:1999.2px;top:1136.25px;width:1px;height:29.75px;background:#d6d7d8"></div><div class="a" style="left:1999.2px;top:1166px;width:1px;height:29.75px;background:#d6d7d8"></div><div class="a" style="left:1999.2px;top:1195.75px;width:1px;height:29.75px;background:#d6d7d8"></div><div class="a" style="left:1999.2px;top:1225.5px;width:1px;height:29.75px;background:#d6d7d8"></div><div class="a" style="left:1999.2px;top:1255.25px;width:1px;height:29.75px;background:#d6d7d8"></div><div class="a" style="left:1999.2px;top:1285px;width:1px;height:29.75px;background:#d6d7d8"></div><div class="a" style="left:1999.2px;top:1314.75px;width:1px;height:29.75px;background:#d6d7d8"></div><div class="a" style="left:1999.2px;top:1344.5px;width:1px;height:24.5px;background:#d6d7d8"></div><div class="a" style="left:2172px;top:214px;width:1px;height:29.75px;background:#d6d7d8"></div><div class="a" style="left:2172px;top:243.75px;width:1px;height:29.75px;background:#d6d7d8"></div><div class="a" style="left:2172px;top:273.5px;width:1px;height:29.75px;background:#d6d7d8"></div><div class="a" style="left:2172px;top:303.25px;width:1px;height:29.75px;background:#d6d7d8"></div><div class="a" style="left:2172px;top:333px;width:1px;height:29.75px;background:#d6d7d8"></div><div class="a" style="left:2172px;top:362.75px;width:1px;height:29.75px;background:#d6d7d8"></div><div class="a" style="left:2172px;top:392.5px;width:1px;height:29.75px;background:#d6d7d8"></div><div class="a" style="left:2172px;top:422.25px;width:1px;height:29.75px;background:#d6d7d8"></div><div class="a" style="left:2172px;top:928px;width:1px;height:29.75px;background:#d6d7d8"></div><div class="a" style="left:2172px;top:957.75px;width:1px;height:29.75px;background:#d6d7d8"></div><div class="a" style="left:2172px;top:1255.25px;width:1px;height:29.75px;background:#d6d7d8"></div><div class="a" style="left:2172px;top:1285px;width:1px;height:29.75px;background:#d6d7d8"></div><div class="a" style="left:2172px;top:1314.75px;width:1px;height:29.75px;background:#d6d7d8"></div><div class="a" style="left:2172px;top:1344.5px;width:1px;height:24.5px;background:#d6d7d8"></div><div class="a" style="left:2344.9px;top:214px;width:1px;height:29.75px;background:#d6d7d8"></div><div class="a" style="left:2344.9px;top:243.75px;width:1px;height:29.75px;background:#d6d7d8"></div><div class="a" style="left:2344.9px;top:273.5px;width:1px;height:29.75px;background:#d6d7d8"></div><div class="a" style="left:2344.9px;top:303.25px;width:1px;height:29.75px;background:#d6d7d8"></div><div class="a" style="left:2344.9px;top:333px;width:1px;height:29.75px;background:#d6d7d8"></div><div class="a" style="left:2344.9px;top:362.75px;width:1px;height:29.75px;background:#d6d7d8"></div><div class="a" style="left:2344.9px;top:392.5px;width:1px;height:29.75px;background:#d6d7d8"></div><div class="a" style="left:2344.9px;top:422.25px;width:1px;height:29.75px;background:#d6d7d8"></div><div class="a" style="left:2344.9px;top:928px;width:1px;height:29.75px;background:#d6d7d8"></div><div class="a" style="left:2344.9px;top:957.75px;width:1px;height:29.75px;background:#d6d7d8"></div><div class="a" style="left:2344.9px;top:1255.25px;width:1px;height:29.75px;background:#d6d7d8"></div><div class="a" style="left:2344.9px;top:1285px;width:1px;height:29.75px;background:#d6d7d8"></div><div class="a" style="left:2344.9px;top:1314.75px;width:1px;height:29.75px;background:#d6d7d8"></div><div class="a" style="left:2344.9px;top:1344.5px;width:1px;height:24.5px;background:#d6d7d8"></div><div class="a" style="left:48.7px;top:243.25px;width:2377.3px;height:1px;background:#d6d7d8"></div><div class="a" style="left:48.7px;top:273px;width:2377.3px;height:1px;background:#d6d7d8"></div><div class="a" style="left:48.7px;top:302.75px;width:2377.3px;height:1px;background:#d6d7d8"></div><div class="a" style="left:48.7px;top:332.5px;width:2377.3px;height:1px;background:#d6d7d8"></div><div class="a" style="left:48.7px;top:362.25px;width:2377.3px;height:1px;background:#d6d7d8"></div><div class="a" style="left:48.7px;top:392px;width:67.8px;height:1px;background:#d6d7d8"></div><div class="a" style="left:908.2px;top:392px;width:429.3px;height:1.5px;background:#fff"></div><div class="a" style="left:1623.3px;top:392px;width:48.1px;height:1px;background:#d6d7d8"></div><div class="a" style="left:1957.4px;top:392px;width:468.6px;height:1px;background:#d6d7d8"></div><div class="a" style="left:48.7px;top:421.75px;width:2377.3px;height:1px;background:#d6d7d8"></div><div class="a" style="left:48.7px;top:451.5px;width:2377.3px;height:1px;background:#d6d7d8"></div><div class="a" style="left:48.7px;top:481.25px;width:2377.3px;height:1px;background:#d6d7d8"></div><div class="a" style="left:48.7px;top:511px;width:2377.3px;height:1px;background:#d6d7d8"></div><div class="a" style="left:48.7px;top:540.75px;width:2377.3px;height:1px;background:#d6d7d8"></div><div class="a" style="left:48.7px;top:570.5px;width:2377.3px;height:1px;background:#d6d7d8"></div><div class="a" style="left:48.7px;top:600.25px;width:2377.3px;height:1px;background:#d6d7d8"></div><div class="a" style="left:48.7px;top:630px;width:2377.3px;height:1px;background:#d6d7d8"></div><div class="a" style="left:48.7px;top:659.75px;width:2377.3px;height:1px;background:#d6d7d8"></div><div class="a" style="left:48.7px;top:689.5px;width:2377.3px;height:1px;background:#d6d7d8"></div><div class="a" style="left:48.7px;top:719.25px;width:2377.3px;height:1px;background:#d6d7d8"></div><div class="a" style="left:48.7px;top:749px;width:2377.3px;height:1px;background:#d6d7d8"></div><div class="a" style="left:48.7px;top:778.75px;width:2377.3px;height:1px;background:#d6d7d8"></div><div class="a" style="left:48.7px;top:808.5px;width:2377.3px;height:1px;background:#d6d7d8"></div><div class="a" style="left:48.7px;top:838.25px;width:2377.3px;height:1px;background:#d6d7d8"></div><div class="a" style="left:48.7px;top:868px;width:2377.3px;height:1px;background:#d6d7d8"></div><div class="a" style="left:48.7px;top:897.75px;width:2377.3px;height:1px;background:#d6d7d8"></div><div class="a" style="left:48.7px;top:927.5px;width:2377.3px;height:1px;background:#d6d7d8"></div><div class="a" style="left:48.7px;top:957.25px;width:2377.3px;height:1px;background:#d6d7d8"></div><div class="a" style="left:48.7px;top:987px;width:2377.3px;height:1px;background:#d6d7d8"></div><div class="a" style="left:48.7px;top:1016.75px;width:2377.3px;height:1px;background:#d6d7d8"></div><div class="a" style="left:48.7px;top:1046.5px;width:2377.3px;height:1px;background:#d6d7d8"></div><div class="a" style="left:48.7px;top:1076.25px;width:2377.3px;height:1px;background:#d6d7d8"></div><div class="a" style="left:48.7px;top:1106px;width:2377.3px;height:1px;background:#d6d7d8"></div><div class="a" style="left:48.7px;top:1135.75px;width:2377.3px;height:1px;background:#d6d7d8"></div><div class="a" style="left:48.7px;top:1165.5px;width:2377.3px;height:1px;background:#d6d7d8"></div><div class="a" style="left:48.7px;top:1195.25px;width:2377.3px;height:1px;background:#d6d7d8"></div><div class="a" style="left:48.7px;top:1225px;width:2377.3px;height:1px;background:#d6d7d8"></div><div class="a" style="left:48.7px;top:1254.75px;width:2377.3px;height:1px;background:#d6d7d8"></div><div class="a" style="left:48.7px;top:1284.5px;width:2377.3px;height:1px;background:#d6d7d8"></div><div class="a" style="left:48.7px;top:1314.25px;width:2377.3px;height:1px;background:#d6d7d8"></div><div class="a" style="left:48.7px;top:1344px;width:2377.3px;height:1px;background:#d6d7d8"></div><div class="a" style="left:82px;top:180px;width:1.5px;height:34px;background:#c4c7c5"></div><div class="a" style="left:116px;top:180px;width:1.5px;height:34px;background:#c4c7c5"></div><div class="a" style="left:150.1px;top:180px;width:1.5px;height:34px;background:#c4c7c5"></div><div class="a" style="left:184.2px;top:180px;width:1.5px;height:34px;background:#c4c7c5"></div><div class="a" style="left:440.5px;top:180px;width:1.5px;height:34px;background:#c4c7c5"></div><div class="a" style="left:856.9px;top:180px;width:1.5px;height:34px;background:#c4c7c5"></div><div class="a" style="left:907.7px;top:180px;width:1.5px;height:34px;background:#c4c7c5"></div><div class="a" style="left:1051px;top:180px;width:1.5px;height:34px;background:#c4c7c5"></div><div class="a" style="left:1193.7px;top:180px;width:1.5px;height:34px;background:#c4c7c5"></div><div class="a" style="left:1337px;top:180px;width:1.5px;height:34px;background:#c4c7c5"></div><div class="a" style="left:1480px;top:180px;width:1.5px;height:34px;background:#c4c7c5"></div><div class="a" style="left:1622.8px;top:180px;width:1.5px;height:34px;background:#c4c7c5"></div><div class="a" style="left:1670.9px;top:180px;width:1.5px;height:34px;background:#c4c7c5"></div><div class="a" style="left:1814px;top:180px;width:1.5px;height:34px;background:#c4c7c5"></div><div class="a" style="left:1956.9px;top:180px;width:1.5px;height:34px;background:#c4c7c5"></div><div class="a" style="left:1999.2px;top:180px;width:1.5px;height:34px;background:#c4c7c5"></div><div class="a" style="left:2172px;top:180px;width:1.5px;height:34px;background:#c4c7c5"></div><div class="a" style="left:2344.9px;top:180px;width:1.5px;height:34px;background:#c4c7c5"></div><div class="a" style="left:0px;top:243.25px;width:48.7px;height:1.5px;background:#c4c7c5"></div><div class="a" style="left:0px;top:273px;width:48.7px;height:1.5px;background:#c4c7c5"></div><div class="a" style="left:0px;top:302.75px;width:48.7px;height:1.5px;background:#c4c7c5"></div><div class="a" style="left:0px;top:332.5px;width:48.7px;height:1.5px;background:#c4c7c5"></div><div class="a" style="left:0px;top:362.25px;width:48.7px;height:1.5px;background:#c4c7c5"></div><div class="a" style="left:0px;top:392px;width:48.7px;height:1.5px;background:#c4c7c5"></div><div class="a" style="left:0px;top:421.75px;width:48.7px;height:1.5px;background:#c4c7c5"></div><div class="a" style="left:0px;top:451.5px;width:48.7px;height:1.5px;background:#c4c7c5"></div><div class="a" style="left:0px;top:481.25px;width:48.7px;height:1.5px;background:#c4c7c5"></div><div class="a" style="left:0px;top:511px;width:48.7px;height:1.5px;background:#c4c7c5"></div><div class="a" style="left:0px;top:540.75px;width:48.7px;height:1.5px;background:#c4c7c5"></div><div class="a" style="left:0px;top:570.5px;width:48.7px;height:1.5px;background:#c4c7c5"></div><div class="a" style="left:0px;top:600.25px;width:48.7px;height:1.5px;background:#c4c7c5"></div><div class="a" style="left:0px;top:630px;width:48.7px;height:1.5px;background:#c4c7c5"></div><div class="a" style="left:0px;top:659.75px;width:48.7px;height:1.5px;background:#c4c7c5"></div><div class="a" style="left:0px;top:689.5px;width:48.7px;height:1.5px;background:#c4c7c5"></div><div class="a" style="left:0px;top:719.25px;width:48.7px;height:1.5px;background:#c4c7c5"></div><div class="a" style="left:0px;top:749px;width:48.7px;height:1.5px;background:#c4c7c5"></div><div class="a" style="left:0px;top:778.75px;width:48.7px;height:1.5px;background:#c4c7c5"></div><div class="a" style="left:0px;top:808.5px;width:48.7px;height:1.5px;background:#c4c7c5"></div><div class="a" style="left:0px;top:838.25px;width:48.7px;height:1.5px;background:#c4c7c5"></div><div class="a" style="left:0px;top:868px;width:48.7px;height:1.5px;background:#c4c7c5"></div><div class="a" style="left:0px;top:897.75px;width:48.7px;height:1.5px;background:#c4c7c5"></div><div class="a" style="left:0px;top:927.5px;width:48.7px;height:1.5px;background:#c4c7c5"></div><div class="a" style="left:0px;top:957.25px;width:48.7px;height:1.5px;background:#c4c7c5"></div><div class="a" style="left:0px;top:987px;width:48.7px;height:1.5px;background:#c4c7c5"></div><div class="a" style="left:0px;top:1016.75px;width:48.7px;height:1.5px;background:#c4c7c5"></div><div class="a" style="left:0px;top:1046.5px;width:48.7px;height:1.5px;background:#c4c7c5"></div><div class="a" style="left:0px;top:1076.25px;width:48.7px;height:1.5px;background:#c4c7c5"></div><div class="a" style="left:0px;top:1106px;width:48.7px;height:1.5px;background:#c4c7c5"></div><div class="a" style="left:0px;top:1135.75px;width:48.7px;height:1.5px;background:#c4c7c5"></div><div class="a" style="left:0px;top:1165.5px;width:48.7px;height:1.5px;background:#c4c7c5"></div><div class="a" style="left:0px;top:1195.25px;width:48.7px;height:1.5px;background:#c4c7c5"></div><div class="a" style="left:0px;top:1225px;width:48.7px;height:1.5px;background:#c4c7c5"></div><div class="a" style="left:0px;top:1254.75px;width:48.7px;height:1.5px;background:#c4c7c5"></div><div class="a" style="left:0px;top:1284.5px;width:48.7px;height:1.5px;background:#c4c7c5"></div><div class="a" style="left:0px;top:1314.25px;width:48.7px;height:1.5px;background:#c4c7c5"></div><div class="a" style="left:0px;top:1344px;width:48.7px;height:1.5px;background:#c4c7c5"></div><div class="a" style="left:0px;top:178.5px;width:2443px;height:1.5px;background:#c4c7c5"></div><div class="a" style="left:0px;top:213.5px;width:2426px;height:1.5px;background:#c4c7c5"></div><div class="a" style="left:48.2px;top:179px;width:1.5px;height:1204px;background:#c4c7c5"></div><div class="a" style="left:42.8px;top:179px;width:5.7px;height:33px;background:#b8b8b8"></div><div class="a" style="left:0px;top:206.5px;width:48.5px;height:5.5px;background:#b8b8b8"></div><div class="ch" style="left:48.7px;width:33.8px">A</div><div class="ch" style="left:82.5px;width:34px">B</div><div class="ch" style="left:116.5px;width:34.1px">C</div><div class="ch" style="left:150.6px;width:34.1px">D</div><div class="ch" style="left:184.7px;width:256.3px">E</div><div class="ch" style="left:441px;width:416.4px">F</div><div class="ch" style="left:857.4px;width:50.8px">G</div><div class="ch" style="left:908.2px;width:143.3px">H</div><div class="ch" style="left:1051.5px;width:142.7px">I</div><div class="ch" style="left:1194.2px;width:143.3px">J</div><div class="ch" style="left:1337.5px;width:143px">K</div><div class="ch" style="left:1480.5px;width:142.8px">L</div><div class="ch" style="left:1623.3px;width:48.1px">M</div><div class="ch" style="left:1671.4px;width:143.1px">N</div><div class="ch" style="left:1814.5px;width:142.9px">O</div><div class="ch" style="left:1957.4px;width:42.3px">P</div><div class="ch" style="left:1999.7px;width:172.8px">Q</div><div class="ch" style="left:2172.5px;width:172.9px">R</div><div class="ch" style="left:2345.4px;width:172.6px">S</div><div class="rh" style="top:214px">1</div><div class="rh" style="top:243.75px">2</div><div class="rh" style="top:273.5px">3</div><div class="rh" style="top:303.25px">4</div><div class="rh" style="top:333px">5</div><div class="rh" style="top:362.75px">6</div><div class="rh" style="top:392.5px">7</div><div class="rh" style="top:422.25px">8</div><div class="rh" style="top:452px">9</div><div class="rh" style="top:481.75px">10</div><div class="rh" style="top:511.5px">11</div><div class="rh" style="top:541.25px">12</div><div class="rh" style="top:571px">13</div><div class="rh" style="top:600.75px">14</div><div class="rh" style="top:630.5px">15</div><div class="rh" style="top:660.25px">16</div><div class="rh" style="top:690px">17</div><div class="rh" style="top:719.75px">18</div><div class="rh" style="top:749.5px">19</div><div class="rh" style="top:779.25px">20</div><div class="rh" style="top:809px">21</div><div class="rh" style="top:838.75px">22</div><div class="rh" style="top:868.5px">23</div><div class="rh" style="top:898.25px">24</div><div class="rh" style="top:928px">25</div><div class="rh" style="top:957.75px">26</div><div class="rh" style="top:987.5px">27</div><div class="rh" style="top:1017.25px">28</div><div class="rh" style="top:1047px">29</div><div class="rh" style="top:1076.75px">30</div><div class="rh" style="top:1106.5px">31</div><div class="rh" style="top:1136.25px">32</div><div class="rh" style="top:1166px">33</div><div class="rh" style="top:1195.75px">34</div><div class="rh" style="top:1225.5px">35</div><div class="rh" style="top:1255.25px">36</div><div class="rh" style="top:1285px">37</div><div class="rh" style="top:1314.75px">38</div><div class="rh" style="top:1344.5px">39</div><div class="c " style="left:122px;top:214.6px;">売上債権</div><div class="c " style="left:122px;top:274.1px;font-weight:bold">架空売上</div><div class="c " style="left:122px;top:303.85px;font-weight:bold">押込み販売</div><div class="c " style="left:1343px;top:274.1px;">運転資金</div><div class="c " style="left:1486px;top:274.1px;">売上債権＋棚卸資産-仕入債務</div><div class="c r n" style="right:1184px;top:333.6px;">7,324,869</div><div class="c r w" style="right:1470px;top:363.35px;margin-top:1.2px">48期</div><div class="c r w" style="right:1470px;top:393.1px;">2018年3月期</div><div class="c r w" style="right:1327.3px;top:363.35px;margin-top:1.2px">49期</div><div class="c r w" style="right:1327.3px;top:393.1px;">2019年3月期</div><div class="c r w" style="right:1184px;top:363.35px;margin-top:1.2px">50期</div><div class="c r w" style="right:1184px;top:393.1px;">2020年3月期</div><div class="c r w" style="right:1041px;top:378.23px">修正</div><div class="c r w" style="right:898.2px;top:378.23px">修正後</div><div class="c r w" style="right:707px;top:378.23px">増減</div><div class="c r w" style="right:564.1px;top:378.23px">増減率</div><div class="c " style="left:2005.2px;top:393.1px;color:#cc0000">コメント</div><div class="c " style="left:122px;top:422.85px;">売掛金</div><div class="c " style="left:446.5px;top:422.85px;">回収条件</div><div class="c r " style="right:1613.3px;top:422.85px;">千円</div><div class="c r n" style="right:1470px;top:422.85px;">603,406</div><div class="c r n" style="right:1327.3px;top:422.85px;">614,057</div><div class="c r n" style="right:1184px;top:422.85px;">610,406</div><div class="c r n" style="right:898.2px;top:422.85px;">610,406</div><div class="c r n" style="right:707px;top:422.85px;"><span style="font-size:1.12em;line-height:0">▲</span>3,652</div><div class="c r n" style="right:564.1px;top:422.85px;"><span style="font-size:1.12em;line-height:0">▲</span>0.6%</div><div class="c " style="left:156.1px;top:452.6px;">A株式会社</div><div class="c " style="left:446.5px;top:452.6px;">月末締め翌月末払い（半金半手/手形120日）</div><div class="c r " style="right:1613.3px;top:452.6px;">千円</div><div class="c r n" style="right:1470px;top:452.6px;">290,000</div><div class="c r n" style="right:1327.3px;top:452.6px;">320,000</div><div class="c r n" style="right:1184px;top:452.6px;">310,000</div><div class="c r n" style="right:1041px;top:452.6px;"><span style="font-size:1.12em;line-height:0">▲</span>10,000</div><div class="c r n" style="right:898.2px;top:452.6px;">300,000</div><div class="c r n" style="right:707px;top:452.6px;"><span style="font-size:1.12em;line-height:0">▲</span>10,000</div><div class="c r n" style="right:564.1px;top:452.6px;"><span style="font-size:1.12em;line-height:0">▲</span>3.1%</div><div class="c" style="left:2005.2px;top:452.6px;width:420.8px;overflow:hidden">販売管理システムからの出力資料「売掛金増減明細表」との一致を確認した。</div><div class="c " style="left:156.1px;top:482.35px;">B株式会社</div><div class="c " style="left:446.5px;top:482.35px;">月末締め翌月末払い（半金半手/手形90日）</div><div class="c r " style="right:1613.3px;top:482.35px;">千円</div><div class="c r n" style="right:1470px;top:482.35px;">110,000</div><div class="c r n" style="right:1327.3px;top:482.35px;">90,000</div><div class="c r n" style="right:1184px;top:482.35px;">100,000</div><div class="c r n" style="right:898.2px;top:482.35px;">100,000</div><div class="c r n" style="right:707px;top:482.35px;">10,000</div><div class="c r n" style="right:564.1px;top:482.35px;">11.1%</div><div class="c" style="left:2005.2px;top:482.35px;width:420.8px;overflow:hidden">販売管理システムからの出力資料「売掛金増減明細表」との一致を確認した。</div><div class="c " style="left:156.1px;top:512.1px;">C株式会社</div><div class="c " style="left:446.5px;top:512.1px;">月末締め翌月末払い（半金半手/手形90日）</div><div class="c r " style="right:1613.3px;top:512.1px;">千円</div><div class="c r n" style="right:1470px;top:512.1px;">28,000</div><div class="c r n" style="right:1327.3px;top:512.1px;">29,000</div><div class="c r n" style="right:1184px;top:512.1px;">30,000</div><div class="c r n" style="right:1041px;top:512.1px;"><span style="font-size:1.12em;line-height:0">▲</span>20,000</div><div class="c r n" style="right:898.2px;top:512.1px;">10,000</div><div class="c r n" style="right:707px;top:512.1px;">1,000</div><div class="c r n" style="right:564.1px;top:512.1px;">3.4%</div><div class="c" style="left:2005.2px;top:512.1px;width:420.8px;overflow:hidden">販売管理システムからの出力資料「売掛金増減明細表」との一致を確認した。</div><div class="c " style="left:156.1px;top:541.85px;">D株式会社</div><div class="c " style="left:446.5px;top:541.85px;">月末締め翌月末払い（半金半手/手形120日）</div><div class="c r " style="right:1613.3px;top:541.85px;">千円</div><div class="c r n" style="right:1470px;top:541.85px;">25,500</div><div class="c r n" style="right:1327.3px;top:541.85px;">24,000</div><div class="c r n" style="right:1184px;top:541.85px;">25,000</div><div class="c r n" style="right:898.2px;top:541.85px;">25,000</div><div class="c r n" style="right:707px;top:541.85px;">1,000</div><div class="c r n" style="right:564.1px;top:541.85px;">4.2%</div><div class="c" style="left:2005.2px;top:541.85px;width:420.8px;overflow:hidden">販売管理システムからの出力資料「売掛金増減明細表」との一致を確認した。</div><div class="c " style="left:156.1px;top:571.6px;">E株式会社</div><div class="c " style="left:446.5px;top:571.6px;">月末締め翌月末払い（半金半手/手形120日）</div><div class="c r " style="right:1613.3px;top:571.6px;">千円</div><div class="c r n" style="right:1470px;top:571.6px;">21,000</div><div class="c r n" style="right:1327.3px;top:571.6px;">22,200</div><div class="c r n" style="right:1184px;top:571.6px;">22,300</div><div class="c r n" style="right:898.2px;top:571.6px;">22,300</div><div class="c r n" style="right:707px;top:571.6px;">100</div><div class="c r n" style="right:564.1px;top:571.6px;">0.5%</div><div class="c" style="left:2005.2px;top:571.6px;width:420.8px;overflow:hidden">販売管理システムからの出力資料「売掛金増減明細表」との一致を確認した。</div><div class="c " style="left:156.1px;top:601.35px;">F株式会社</div><div class="c " style="left:446.5px;top:601.35px;">月末締め翌月末払い（半金半手/手形120日）</div><div class="c r " style="right:1613.3px;top:601.35px;">千円</div><div class="c r n" style="right:1470px;top:601.35px;">20,500</div><div class="c r n" style="right:1327.3px;top:601.35px;">21,000</div><div class="c r n" style="right:1184px;top:601.35px;">20,000</div><div class="c r n" style="right:898.2px;top:601.35px;">20,000</div><div class="c r n" style="right:707px;top:601.35px;"><span style="font-size:1.12em;line-height:0">▲</span>1,000</div><div class="c r n" style="right:564.1px;top:601.35px;"><span style="font-size:1.12em;line-height:0">▲</span>4.8%</div><div class="c" style="left:2005.2px;top:601.35px;width:420.8px;overflow:hidden">販売管理システムからの出力資料「売掛金増減明細表」との一致を確認した。</div><div class="c " style="left:156.1px;top:631.1px;">G株式会社</div><div class="c " style="left:446.5px;top:631.1px;">月末締め翌月末払い（半金半手/手形120日）</div><div class="c r " style="right:1613.3px;top:631.1px;">千円</div><div class="c r n" style="right:1470px;top:631.1px;">18,000</div><div class="c r n" style="right:1327.3px;top:631.1px;">17,000</div><div class="c r n" style="right:1184px;top:631.1px;">19,000</div><div class="c r n" style="right:898.2px;top:631.1px;">19,000</div><div class="c r n" style="right:707px;top:631.1px;">2,000</div><div class="c r n" style="right:564.1px;top:631.1px;">11.8%</div><div class="c" style="left:2005.2px;top:631.1px;width:420.8px;overflow:hidden">販売管理システムからの出力資料「売掛金増減明細表」との一致を確認した。</div><div class="c " style="left:156.1px;top:660.85px;">H株式会社</div><div class="c " style="left:446.5px;top:660.85px;">月末締め翌月末払い（半金半手/手形120日）</div><div class="c r " style="right:1613.3px;top:660.85px;">千円</div><div class="c r n" style="right:1470px;top:660.85px;">15,000</div><div class="c r n" style="right:1327.3px;top:660.85px;">14,000</div><div class="c r n" style="right:1184px;top:660.85px;">15,500</div><div class="c r n" style="right:898.2px;top:660.85px;">15,500</div><div class="c r n" style="right:707px;top:660.85px;">1,500</div><div class="c r n" style="right:564.1px;top:660.85px;">10.7%</div><div class="c" style="left:2005.2px;top:660.85px;width:420.8px;overflow:hidden">販売管理システムからの出力資料「売掛金増減明細表」との一致を確認した。</div><div class="c " style="left:156.1px;top:690.6px;">I株式会社</div><div class="c " style="left:446.5px;top:690.6px;">月末締め翌月末払い（半金半手/手形120日）</div><div class="c r " style="right:1613.3px;top:690.6px;">千円</div><div class="c r n" style="right:1470px;top:690.6px;">14,500</div><div class="c r n" style="right:1327.3px;top:690.6px;">14,030</div><div class="c r n" style="right:1184px;top:690.6px;">14,400</div><div class="c r n" style="right:898.2px;top:690.6px;">14,400</div><div class="c r n" style="right:707px;top:690.6px;">370</div><div class="c r n" style="right:564.1px;top:690.6px;">2.6%</div><div class="c" style="left:2005.2px;top:690.6px;width:420.8px;overflow:hidden">販売管理システムからの出力資料「売掛金増減明細表」との一致を確認した。</div><div class="c " style="left:156.1px;top:720.35px;">J株式会社</div><div class="c " style="left:446.5px;top:720.35px;">月末締め翌月末払い（振込100%）</div><div class="c r " style="right:1613.3px;top:720.35px;">千円</div><div class="c r n" style="right:1470px;top:720.35px;">12,000</div><div class="c r n" style="right:1327.3px;top:720.35px;">13,500</div><div class="c r n" style="right:1184px;top:720.35px;">13,300</div><div class="c r n" style="right:898.2px;top:720.35px;">13,300</div><div class="c r n" style="right:707px;top:720.35px;"><span style="font-size:1.12em;line-height:0">▲</span>200</div><div class="c r n" style="right:564.1px;top:720.35px;"><span style="font-size:1.12em;line-height:0">▲</span>1.5%</div><div class="c" style="left:2005.2px;top:720.35px;width:420.8px;overflow:hidden">販売管理システムからの出力資料「売掛金増減明細表」との一致を確認した。</div><div class="c " style="left:156.1px;top:750.1px;">K株式会社</div><div class="c " style="left:446.5px;top:750.1px;">月末締め翌月末払い（振込100%）</div><div class="c r " style="right:1613.3px;top:750.1px;">千円</div><div class="c r n" style="right:1470px;top:750.1px;">10,000</div><div class="c r n" style="right:1327.3px;top:750.1px;">10,500</div><div class="c r n" style="right:1184px;top:750.1px;">11,100</div><div class="c r n" style="right:898.2px;top:750.1px;">11,100</div><div class="c r n" style="right:707px;top:750.1px;">600</div><div class="c r n" style="right:564.1px;top:750.1px;">5.7%</div><div class="c" style="left:2005.2px;top:750.1px;width:420.8px;overflow:hidden">販売管理システムからの出力資料「売掛金増減明細表」との一致を確認した。</div><div class="c " style="left:156.1px;top:779.85px;">L株式会社</div><div class="c " style="left:446.5px;top:779.85px;">月末締め翌月末払い（振込100%）</div><div class="c r " style="right:1613.3px;top:779.85px;">千円</div><div class="c r n" style="right:1470px;top:779.85px;">10,000</div><div class="c r n" style="right:1327.3px;top:779.85px;">9,500</div><div class="c r n" style="right:1184px;top:779.85px;">9,000</div><div class="c r n" style="right:898.2px;top:779.85px;">9,000</div><div class="c r n" style="right:707px;top:779.85px;"><span style="font-size:1.12em;line-height:0">▲</span>500</div><div class="c r n" style="right:564.1px;top:779.85px;"><span style="font-size:1.12em;line-height:0">▲</span>5.3%</div><div class="c" style="left:2005.2px;top:779.85px;width:420.8px;overflow:hidden">販売管理システムからの出力資料「売掛金増減明細表」との一致を確認した。</div><div class="c " style="left:156.1px;top:809.6px;">M株式会社</div><div class="c " style="left:446.5px;top:809.6px;">月末締め翌月末払い（振込100%）</div><div class="c r " style="right:1613.3px;top:809.6px;">千円</div><div class="c r n" style="right:1470px;top:809.6px;">8,500</div><div class="c r n" style="right:1327.3px;top:809.6px;">7,500</div><div class="c r n" style="right:1184px;top:809.6px;">9,500</div><div class="c r n" style="right:898.2px;top:809.6px;">9,500</div><div class="c r n" style="right:707px;top:809.6px;">2,000</div><div class="c r n" style="right:564.1px;top:809.6px;">26.7%</div><div class="c" style="left:2005.2px;top:809.6px;width:420.8px;overflow:hidden">販売管理システムからの出力資料「売掛金増減明細表」との一致を確認した。</div><div class="c " style="left:156.1px;top:839.35px;">N株式会社</div><div class="c " style="left:446.5px;top:839.35px;">月末締め翌月末払い（振込100%）</div><div class="c r " style="right:1613.3px;top:839.35px;">千円</div><div class="c r n" style="right:1470px;top:839.35px;">5,400</div><div class="c r n" style="right:1327.3px;top:839.35px;">5,500</div><div class="c r n" style="right:1184px;top:839.35px;">5,700</div><div class="c r n" style="right:898.2px;top:839.35px;">5,700</div><div class="c r n" style="right:707px;top:839.35px;">200</div><div class="c r n" style="right:564.1px;top:839.35px;">3.6%</div><div class="c" style="left:2005.2px;top:839.35px;width:420.8px;overflow:hidden">販売管理システムからの出力資料「売掛金増減明細表」との一致を確認した。</div><div class="c " style="left:156.1px;top:869.1px;">0株式会社</div><div class="c " style="left:446.5px;top:869.1px;">月末締め翌月末払い（振込100%）</div><div class="c r " style="right:1613.3px;top:869.1px;">千円</div><div class="c r n" style="right:1470px;top:869.1px;">3,500</div><div class="c r n" style="right:1327.3px;top:869.1px;">3,510</div><div class="c r n" style="right:1184px;top:869.1px;">3,400</div><div class="c r n" style="right:898.2px;top:869.1px;">3,400</div><div class="c r n" style="right:707px;top:869.1px;"><span style="font-size:1.12em;line-height:0">▲</span>110</div><div class="c r n" style="right:564.1px;top:869.1px;"><span style="font-size:1.12em;line-height:0">▲</span>3.1%</div><div class="c" style="left:2005.2px;top:869.1px;width:420.8px;overflow:hidden">販売管理システムからの出力資料「売掛金増減明細表」との一致を確認した。</div><div class="c " style="left:156.1px;top:898.85px;">その他（100万円以下）</div><div class="c " style="left:446.5px;top:898.85px;">月末締め翌月末払い（振込100%）</div><div class="c r " style="right:1613.3px;top:898.85px;">千円</div><div class="c r n" style="right:1470px;top:898.85px;">11,506</div><div class="c r n" style="right:1327.3px;top:898.85px;">12,817</div><div class="c r n" style="right:1184px;top:898.85px;">2,206</div><div class="c r n" style="right:898.2px;top:898.85px;">2,206</div><div class="c r n" style="right:707px;top:898.85px;"><span style="font-size:1.12em;line-height:0">▲</span>10,612</div><div class="c r n" style="right:564.1px;top:898.85px;"><span style="font-size:1.12em;line-height:0">▲</span>82.8%</div><div class="c" style="left:2005.2px;top:898.85px;width:420.8px;overflow:hidden">販売管理システムからの出力資料「売掛金増減明細表」との一致を確認した。</div><div class="c " style="left:122px;top:958.35px;">受取手形</div><div class="c r " style="right:1613.3px;top:958.35px;">千円</div><div class="c r n" style="right:1470px;top:958.35px;">749,300</div><div class="c r n" style="right:1327.3px;top:958.35px;">749,200</div><div class="c r n" style="right:1184px;top:958.35px;">769,300</div><div class="c r n" style="right:898.2px;top:958.35px;">734,300</div><div class="c r n" style="right:707px;top:958.35px;">20,100</div><div class="c r n" style="right:564.1px;top:958.35px;">2.7%</div><div class="c " style="left:156.1px;top:988.1px;">A株式会社</div><div class="c r " style="right:1613.3px;top:988.1px;">千円</div><div class="c r n" style="right:1470px;top:988.1px;">440,000</div><div class="c r n" style="right:1327.3px;top:988.1px;">460,000</div><div class="c r n" style="right:1184px;top:988.1px;">450,000</div><div class="c r n" style="right:898.2px;top:988.1px;">450,000</div><div class="c r n" style="right:707px;top:988.1px;"><span style="font-size:1.12em;line-height:0">▲</span>10,000</div><div class="c r n" style="right:564.1px;top:988.1px;"><span style="font-size:1.12em;line-height:0">▲</span>2.2%</div><div class="c" style="left:2005.2px;top:988.1px;width:420.8px;overflow:hidden">受取手形の期日別管理表との一致を確認した。</div><div class="c " style="left:156.1px;top:1017.85px;">B株式会社</div><div class="c r " style="right:1613.3px;top:1017.85px;">千円</div><div class="c r n" style="right:1470px;top:1017.85px;">110,000</div><div class="c r n" style="right:1327.3px;top:1017.85px;">90,000</div><div class="c r n" style="right:1184px;top:1017.85px;">100,000</div><div class="c r n" style="right:898.2px;top:1017.85px;">100,000</div><div class="c r n" style="right:707px;top:1017.85px;">10,000</div><div class="c r n" style="right:564.1px;top:1017.85px;">11.1%</div><div class="c" style="left:2005.2px;top:1017.85px;width:420.8px;overflow:hidden">受取手形の期日別管理表との一致を確認した。</div><div class="c " style="left:156.1px;top:1047.6px;">C株式会社</div><div class="c r " style="right:1613.3px;top:1047.6px;">千円</div><div class="c r n" style="right:1470px;top:1047.6px;">28,000</div><div class="c r n" style="right:1327.3px;top:1047.6px;">29,000</div><div class="c r n" style="right:1184px;top:1047.6px;">45,000</div><div class="c r n" style="right:1041px;top:1047.6px;"><span style="font-size:1.12em;line-height:0">▲</span>35,000</div><div class="c r n" style="right:898.2px;top:1047.6px;">10,000</div><div class="c r n" style="right:707px;top:1047.6px;">16,000</div><div class="c r n" style="right:564.1px;top:1047.6px;">55.2%</div><div class="c" style="left:2005.2px;top:1047.6px;width:420.8px;overflow:hidden">受取手形の期日別管理表との一致を確認した。</div><div class="c " style="left:156.1px;top:1077.35px;">D株式会社</div><div class="c r " style="right:1613.3px;top:1077.35px;">千円</div><div class="c r n" style="right:1470px;top:1077.35px;">36,500</div><div class="c r n" style="right:1327.3px;top:1077.35px;">36,000</div><div class="c r n" style="right:1184px;top:1077.35px;">37,500</div><div class="c r n" style="right:898.2px;top:1077.35px;">37,500</div><div class="c r n" style="right:707px;top:1077.35px;">1,500</div><div class="c r n" style="right:564.1px;top:1077.35px;">4.2%</div><div class="c" style="left:2005.2px;top:1077.35px;width:420.8px;overflow:hidden">受取手形の期日別管理表との一致を確認した。</div><div class="c " style="left:156.1px;top:1107.1px;">E株式会社</div><div class="c r " style="right:1613.3px;top:1107.1px;">千円</div><div class="c r n" style="right:1470px;top:1107.1px;">31,450</div><div class="c r n" style="right:1327.3px;top:1107.1px;">32,450</div><div class="c r n" style="right:1184px;top:1107.1px;">33,450</div><div class="c r n" style="right:898.2px;top:1107.1px;">33,450</div><div class="c r n" style="right:707px;top:1107.1px;">1,000</div><div class="c r n" style="right:564.1px;top:1107.1px;">3.1%</div><div class="c" style="left:2005.2px;top:1107.1px;width:420.8px;overflow:hidden">受取手形の期日別管理表との一致を確認した。</div><div class="c " style="left:156.1px;top:1136.85px;">F株式会社</div><div class="c r " style="right:1613.3px;top:1136.85px;">千円</div><div class="c r n" style="right:1470px;top:1136.85px;">30,500</div><div class="c r n" style="right:1327.3px;top:1136.85px;">31,000</div><div class="c r n" style="right:1184px;top:1136.85px;">30,000</div><div class="c r n" style="right:898.2px;top:1136.85px;">30,000</div><div class="c r n" style="right:707px;top:1136.85px;"><span style="font-size:1.12em;line-height:0">▲</span>1,000</div><div class="c r n" style="right:564.1px;top:1136.85px;"><span style="font-size:1.12em;line-height:0">▲</span>3.2%</div><div class="c" style="left:2005.2px;top:1136.85px;width:420.8px;overflow:hidden">受取手形の期日別管理表との一致を確認した。</div><div class="c " style="left:156.1px;top:1166.6px;">G株式会社</div><div class="c r " style="right:1613.3px;top:1166.6px;">千円</div><div class="c r n" style="right:1470px;top:1166.6px;">29,000</div><div class="c r n" style="right:1327.3px;top:1166.6px;">27,500</div><div class="c r n" style="right:1184px;top:1166.6px;">28,500</div><div class="c r n" style="right:898.2px;top:1166.6px;">28,500</div><div class="c r n" style="right:707px;top:1166.6px;">1,000</div><div class="c r n" style="right:564.1px;top:1166.6px;">3.6%</div><div class="c" style="left:2005.2px;top:1166.6px;width:420.8px;overflow:hidden">受取手形の期日別管理表との一致を確認した。</div><div class="c " style="left:156.1px;top:1196.35px;">H株式会社</div><div class="c r " style="right:1613.3px;top:1196.35px;">千円</div><div class="c r n" style="right:1470px;top:1196.35px;">21,250</div><div class="c r n" style="right:1327.3px;top:1196.35px;">22,250</div><div class="c r n" style="right:1184px;top:1196.35px;">23,250</div><div class="c r n" style="right:898.2px;top:1196.35px;">23,250</div><div class="c r n" style="right:707px;top:1196.35px;">1,000</div><div class="c r n" style="right:564.1px;top:1196.35px;">4.5%</div><div class="c" style="left:2005.2px;top:1196.35px;width:420.8px;overflow:hidden">受取手形の期日別管理表との一致を確認した。</div><div class="c " style="left:156.1px;top:1226.1px;">I株式会社</div><div class="c r " style="right:1613.3px;top:1226.1px;">千円</div><div class="c r n" style="right:1470px;top:1226.1px;">22,600</div><div class="c r n" style="right:1327.3px;top:1226.1px;">21,000</div><div class="c r n" style="right:1184px;top:1226.1px;">21,600</div><div class="c r n" style="right:898.2px;top:1226.1px;">21,600</div><div class="c r n" style="right:707px;top:1226.1px;">600</div><div class="c r n" style="right:564.1px;top:1226.1px;">2.9%</div><div class="c" style="left:2005.2px;top:1226.1px;width:420.8px;overflow:hidden">受取手形の期日別管理表との一致を確認した。</div><div class="c " style="left:122px;top:1315.35px;">出所：勘定内訳書</div><div class="a" style="left:1337px;top:955.75px;width:144.5px;height:30.75px;border:2.4px solid #1a73e8"></div><div class="a" style="left:1475.5px;top:981.5px;width:10px;height:10px;background:#1a73e8;border:1px solid #fff"></div><svg class="a" style="left:1192.7px;top:954.95px" width="145.8" height="32.75"><rect x="1.2" y="1.2" width="143.4" height="30.35" fill="none" stroke="#1a73e8" stroke-width="2.4" stroke-dasharray="8 5.5"/></svg><svg class="a" style="left:1370.5px;top:969px" width="16" height="26" viewBox="0 0 16 26"><path d="M1 1V20L5.5 15.5L9 24L12 22.8L8.5 14.5H14.5Z" fill="#000" stroke="#fff" stroke-width="1.5" stroke-linejoin="round"/></svg><div class="a" style="left:2426px;top:214px;width:17px;height:1169px;background:#fff"></div><div class="a" style="left:2426px;top:179px;width:17px;height:35px;background:#f8f9fa"></div><div class="a" style="left:2425.5px;top:179px;width:1px;height:1204px;background:#e8eaed"></div><div class="a" style="left:2425.5px;top:179px;width:1.5px;height:35px;background:#c4c7c5"></div><div class="a" style="left:2426px;top:213px;width:17px;height:1px;background:#e8eaed"></div><div class="a" style="left:2428px;top:216px;width:13px;height:38px;border-radius:7px;background:#dadce0"></div><div class="a" style="left:48.7px;top:1369px;width:2377.3px;height:14px;background:#fff"></div><div class="a" style="left:51px;top:1369px;width:1113px;height:13px;border-radius:7px;background:#dadce0"></div><div class="a" style="left:2380px;top:1368px;width:1px;height:14px;background:#dadce0"></div><div class="a" style="left:2398px;top:1368px;width:1px;height:14px;background:#dadce0"></div><div class="arr" style="left:2387px;top:1372px;border-top:4px solid transparent;border-bottom:4px solid transparent;border-right:4px solid #80868b;border-left:0"></div><div class="arr" style="left:2411px;top:1372px;border-top:4px solid transparent;border-bottom:4px solid transparent;border-left:4px solid #80868b;border-right:0"></div><div class="arr" style="left:2430px;top:1328px;border-left:4px solid transparent;border-right:4px solid transparent;border-bottom:4px solid #80868b;border-top:0"></div><div class="arr" style="left:2430px;top:1352px;border-left:4px solid transparent;border-right:4px solid transparent;border-top:4px solid #80868b"></div><div class="a" style="left:0px;top:1383px;width:2443px;height:57px;background:#f1f3f4"></div><div class="a" style="left:0px;top:1383px;width:2443px;height:1px;background:#e8eaed"></div><svg class="a" style="left:52px;top:1400px" width="20" height="20" viewBox="0 0 20 20"><path d="M10 2V18M2 10H18" stroke="#5f6368" stroke-width="3"/></svg><svg class="a" style="left:97px;top:1401px" width="20" height="18" viewBox="0 0 20 18"><path d="M1 3H19M1 7.5H19M1 12H19M1 16.5H19" stroke="#5f6368" stroke-width="2.6"/></svg><div class="a" style="left:149.5px;top:1384px;width:1px;height:56px;background:#dadce0"></div><div class="a" style="left:289.5px;top:1384px;width:1px;height:56px;background:#dadce0"></div><div class="tab" style="left:174px;color:#5f6368">シート1</div><div class="arr" style="left:254px;top:1408.5px;border-left:5.5px solid transparent;border-right:5.5px solid transparent;border-top:5.5px solid #5f6368"></div><div class="a" style="left:439.5px;top:1384px;width:1px;height:56px;background:#dadce0"></div><div class="tab" style="left:314px;color:#5f6368">現金預金</div><div class="arr" style="left:404px;top:1408.5px;border-left:5.5px solid transparent;border-right:5.5px solid transparent;border-top:5.5px solid #5f6368"></div><div class="a" style="left:440px;top:1383px;width:154px;height:57px;background:#fff;box-shadow:0 1px 3px rgba(60,64,67,.3)"></div><div class="tab" style="left:464px;color:#188038">売上債権</div><div class="arr" style="left:558px;top:1408.5px;border-left:5.5px solid transparent;border-right:5.5px solid transparent;border-top:5.5px solid #188038"></div><div class="a" style="left:729.5px;top:1384px;width:1px;height:56px;background:#dadce0"></div><div class="tab" style="left:618px;color:#5f6368">実態BS</div><div class="arr" style="left:694px;top:1408.5px;border-left:5.5px solid transparent;border-right:5.5px solid transparent;border-top:5.5px solid #5f6368"></div><div class="a" style="left:984.5px;top:1384px;width:1px;height:56px;background:#dadce0"></div><div class="tab" style="left:754px;color:#5f6368">売上債権の年齢調べ</div><div class="arr" style="left:949px;top:1408.5px;border-left:5.5px solid transparent;border-right:5.5px solid transparent;border-top:5.5px solid #5f6368"></div><div class="a" style="left:1136.5px;top:1384px;width:1px;height:56px;background:#dadce0"></div><div class="tab" style="left:1009px;color:#5f6368">棚卸資産</div><div class="arr" style="left:1101px;top:1408.5px;border-left:5.5px solid transparent;border-right:5.5px solid transparent;border-top:5.5px solid #5f6368"></div><div class="a" style="left:1348.5px;top:1384px;width:1px;height:56px;background:#dadce0"></div><div class="tab" style="left:1161px;color:#5f6368">製造原価報告書</div><div class="arr" style="left:1313px;top:1408.5px;border-left:5.5px solid transparent;border-right:5.5px solid transparent;border-top:5.5px solid #5f6368"></div><div class="a" style="left:1502.5px;top:1384px;width:1px;height:56px;background:#dadce0"></div><div class="tab" style="left:1373px;color:#5f6368">原価計算</div><div class="arr" style="left:1467px;top:1408.5px;border-left:5.5px solid transparent;border-right:5.5px solid transparent;border-top:5.5px solid #5f6368"></div><div class="a" style="left:1716.5px;top:1384px;width:1px;height:56px;background:#dadce0"></div><div class="tab" style="left:1527px;color:#5f6368">その他流動資産</div><div class="arr" style="left:1681px;top:1408.5px;border-left:5.5px solid transparent;border-right:5.5px solid transparent;border-top:5.5px solid #5f6368"></div><div class="a" style="left:1868.5px;top:1384px;width:1px;height:56px;background:#dadce0"></div><div class="tab" style="left:1741px;color:#5f6368">仕入債務</div><div class="arr" style="left:1833px;top:1408.5px;border-left:5.5px solid transparent;border-right:5.5px solid transparent;border-top:5.5px solid #5f6368"></div><div class="a" style="left:1969.5px;top:1384px;width:1px;height:56px;background:#dadce0"></div><div class="tab" style="left:1893px;color:#5f6368">その他流</div><div class="a" style="left:1966px;top:1384px;width:6px;height:56px;background:#dadce0"></div><div class="a" style="left:1972px;top:1384px;width:471px;height:56px;background:#f1f3f4"></div><div class="arr" style="left:1992px;top:1402px;border-top:7px solid transparent;border-bottom:7px solid transparent;border-right:6px solid #bdc1c6;border-left:0"></div><div class="arr" style="left:2036px;top:1402px;border-top:7px solid transparent;border-bottom:7px solid transparent;border-left:6px solid #3c4043;border-right:0"></div><svg class="a" style="left:2388px;top:1399px" width="26" height="30" viewBox="0 0 26 30"><path d="M2 0H24A2 2 0 0 1 26 2V22A2 2 0 0 1 24 24H17L13 29L9 24H2A2 2 0 0 1 0 22V2A2 2 0 0 1 2 0Z" fill="#5f6368"/><path d="M13 4.5C13.8 9.5 15.5 11.2 20.5 12C15.5 12.8 13.8 14.5 13 19.5C12.2 14.5 10.5 12.8 5.5 12C10.5 11.2 12.2 9.5 13 4.5Z" fill="#fff"/></svg><div class="a" style="left:2426px;top:1322px;width:17px;height:44px;background:#f8f9fa"></div><div class="a" style="left:2426px;top:1322px;width:17px;height:1px;background:#e8eaed"></div><div class="a" style="left:2426px;top:1344px;width:17px;height:1px;background:#e8eaed"></div><div class="a" style="left:2380px;top:1368px;width:45px;height:15px;background:#f8f9fa"></div><svg class="a" style="left:2474px;top:1392px" width="14" height="18" viewBox="0 0 14 18"><path d="M3 2L10 9L3 16" fill="none" stroke="#444746" stroke-width="2.4"/></svg><div class="arr" style="left:2387px;top:1372px;border-top:4px solid transparent;border-bottom:4px solid transparent;border-right:4px solid #80868b;border-left:0"></div><div class="arr" style="left:2411px;top:1372px;border-top:4px solid transparent;border-bottom:4px solid transparent;border-left:4px solid #80868b;border-right:0"></div><div class="arr" style="left:2430px;top:1330px;border-left:4px solid transparent;border-right:4px solid transparent;border-bottom:4px solid #80868b;border-top:0"></div><div class="arr" style="left:2430px;top:1353px;border-left:4px solid transparent;border-right:4px solid transparent;border-top:4px solid #80868b"></div><div class="a" style="left:2402px;top:1368px;width:1px;height:15px;background:#dadce0"></div></body></html>
